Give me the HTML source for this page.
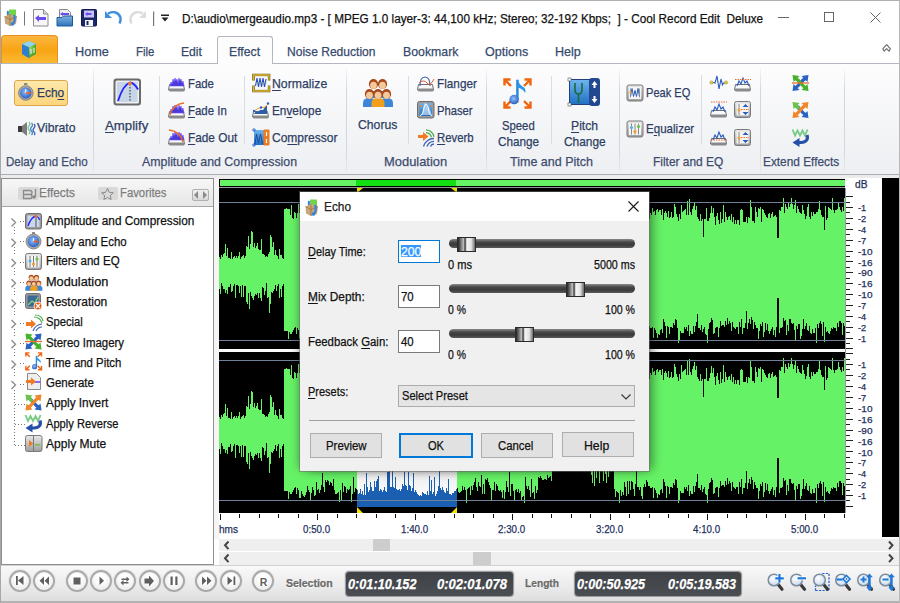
<!DOCTYPE html>
<html><head><meta charset="utf-8">
<style>
*{box-sizing:border-box;margin:0;padding:0}
html,body{width:900px;height:603px;overflow:hidden;background:#fff;font-family:"Liberation Sans",sans-serif;color:#1e2a3c;position:relative}
.a{position:absolute;white-space:nowrap;-webkit-text-stroke:0.25px currentColor}
svg{position:absolute;overflow:visible}
u{text-decoration:underline;text-underline-offset:2px}
.sep{position:absolute;top:68px;width:1px;height:105px;background:linear-gradient(#f6f7f8,#d3d7dd 20%,#d3d7dd 80%,#e9ebee)}
.ssep{position:absolute;width:1px;background:#d9dce1}
.chev{position:absolute;left:10px;width:5px;height:5px;border-right:1.3px solid #8a8a8a;border-top:1.3px solid #8a8a8a;transform:rotate(45deg)}
.btn{position:absolute;height:25px;background:#e1e1e1;border:1px solid #adadad}
.tb{position:absolute;top:570px;width:22px;height:22px;border-radius:50%;background:radial-gradient(circle at 50% 40%,#ffffff 30%,#eeeeee 65%,#dcdcdc 100%);border:2px solid #a9a9a9;box-shadow:inset 0 0 0 1px #fafafa,0 0 0 1px #e6e6e6}
.tm{position:absolute;top:572px;height:24px;background:linear-gradient(#3f4246,#4a4d51);border-radius:3px;box-shadow:0 0 0 1px #9c9c9c,0 0 0 2px #e0e0e0}
.trk{position:absolute;left:449px;width:186px;height:9px;border-radius:4.5px;background:linear-gradient(#8a8a8a,#474747 35%,#3a3a3a 65%,#5a5a5a)}
.thm{position:absolute;width:19px;height:15px;background:linear-gradient(90deg,#262626,#5a5a5a 12%,#bdbdbd 32%,#3a3a3a 42%,#f6f6f6 52%,#e2e2e2 78%,#6a6a6a);border:1px solid #2b2b2b}
</style></head><body>

<!-- TITLE BAR -->
<div class="a" style="left:778px;top:17px;width:11px;height:1px;background:#666"></div>
<div class="a" style="left:824px;top:12px;width:10px;height:10px;border:1px solid #666"></div>
<svg style="left:870px;top:12px" width="11" height="11"><path d="M0.5 0.5L10.5 10.5M10.5 0.5L0.5 10.5" stroke="#666" stroke-width="1"/></svg>

<!-- TAB ROW -->
<div class="a" style="left:0;top:0;width:1px;height:603px;background:#a8a8a8"></div><div class="a" style="left:0;top:0;width:900px;height:1px;background:#b0b0b0"></div>
<div class="a" style="left:1px;top:35px;width:57px;height:29px;background:linear-gradient(#fcb640,#f8a514 50%,#fbbb36);border:1px solid #ea8f1c;border-bottom:none;border-radius:4px 4px 0 0"></div>
<div class="a" style="left:217px;top:36px;width:56px;height:28px;background:#fcfcfd;border:1px solid #b3b8c0;border-bottom:none;border-radius:3px 3px 0 0"></div>
<div class="a" style="left:182.0px;top:12.8px;font-size:12.5px;line-height:12.5px;color:#111;transform:scaleX(0.9397);transform-origin:0 0;">D:\audio\mergeaudio.mp3 - [ MPEG 1.0 layer-3: 44,100 kHz; Stereo; 32-192 Kbps;&nbsp; ] - Cool Record Edit&nbsp; Deluxe</div>
<div class="a" style="left:75.1px;top:45.3px;font-size:13.5px;line-height:13.5px;color:#34496b;transform:scaleX(0.9413);transform-origin:0 0;">Home</div>
<div class="a" style="left:135.7px;top:45.3px;font-size:13.5px;line-height:13.5px;color:#34496b;transform:scaleX(0.8454);transform-origin:0 0;">File</div>
<div class="a" style="left:181.2px;top:45.3px;font-size:13.5px;line-height:13.5px;color:#34496b;transform:scaleX(0.8983);transform-origin:0 0;">Edit</div>
<div class="a" style="left:229.1px;top:45.3px;font-size:13.5px;line-height:13.5px;color:#34496b;transform:scaleX(0.9072);transform-origin:0 0;">Effect</div>
<div class="a" style="left:287.0px;top:45.3px;font-size:13.5px;line-height:13.5px;color:#34496b;transform:scaleX(0.8934);transform-origin:0 0;">Noise Reduction</div>
<div class="a" style="left:402.6px;top:45.3px;font-size:13.5px;line-height:13.5px;color:#34496b;transform:scaleX(0.9115);transform-origin:0 0;">Bookmark</div>
<div class="a" style="left:484.7px;top:45.3px;font-size:13.5px;line-height:13.5px;color:#34496b;transform:scaleX(0.9306);transform-origin:0 0;">Options</div>
<div class="a" style="left:554.8px;top:45.3px;font-size:13.5px;line-height:13.5px;color:#34496b;transform:scaleX(0.9292);transform-origin:0 0;">Help</div>

<!-- RIBBON -->
<div class="a" style="left:1px;top:63px;width:899px;height:112px;background:linear-gradient(#fdfdfe,#f4f5f7 55%,#edeff2);border-top:1px solid #b3b8c0;border-bottom:1px solid #a9aeb5"></div>
<div class="a" style="left:218px;top:63px;width:54px;height:2px;background:#fcfcfd"></div>
<div class="a" style="left:14px;top:80px;width:54px;height:26px;background:linear-gradient(#fde9ad,#fcd57b);border:1px solid #dba54a;border-radius:3px"></div>
<div class="sep" style="left:93px"></div>
<div class="ssep" style="left:159px;top:76px;height:68px"></div>
<div class="ssep" style="left:244px;top:76px;height:68px"></div>
<div class="sep" style="left:346px"></div>
<div class="ssep" style="left:408px;top:76px;height:68px"></div>
<div class="sep" style="left:486px"></div>
<div class="ssep" style="left:551px;top:76px;height:68px"></div>
<div class="sep" style="left:619px"></div>
<div class="ssep" style="left:701px;top:75px;height:69px"></div>
<div class="sep" style="left:760px"></div>
<div class="sep" style="left:844px"></div>
<div class="a" style="left:37.2px;top:85.8px;font-size:13.5px;line-height:13.5px;color:#2d3d63;transform:scaleX(0.8837);transform-origin:0 0;">Ech<u>o</u></div>
<div class="a" style="left:37.2px;top:121.1px;font-size:13.5px;line-height:13.5px;color:#2d3d63;transform:scaleX(0.9052);transform-origin:0 0;">Vibrato</div>
<div class="a" style="left:104.9px;top:118.8px;font-size:13.5px;line-height:13.5px;color:#2d3d63;transform:scaleX(0.9778);transform-origin:0 0;"><u>A</u>mplify</div>
<div class="a" style="left:187.6px;top:76.8px;font-size:13.5px;line-height:13.5px;color:#2d3d63;transform:scaleX(0.8414);transform-origin:0 0;">Fade</div>
<div class="a" style="left:187.6px;top:104.1px;font-size:13.5px;line-height:13.5px;color:#2d3d63;transform:scaleX(0.8472);transform-origin:0 0;"><u>F</u>ade In</div>
<div class="a" style="left:187.6px;top:130.8px;font-size:13.5px;line-height:13.5px;color:#2d3d63;transform:scaleX(0.8757);transform-origin:0 0;"><u>F</u>ade Out</div>
<div class="a" style="left:272.1px;top:76.8px;font-size:13.5px;line-height:13.5px;color:#2d3d63;transform:scaleX(0.9084);transform-origin:0 0;"><u>N</u>ormalize</div>
<div class="a" style="left:272.1px;top:104.1px;font-size:13.5px;line-height:13.5px;color:#2d3d63;transform:scaleX(0.8737);transform-origin:0 0;">En<u>v</u>elope</div>
<div class="a" style="left:272.1px;top:130.8px;font-size:13.5px;line-height:13.5px;color:#2d3d63;transform:scaleX(0.8894);transform-origin:0 0;">Co<u>m</u>pressor</div>
<div class="a" style="left:357.8px;top:118.0px;font-size:13.5px;line-height:13.5px;color:#2d3d63;transform:scaleX(0.9051);transform-origin:0 0;">Chorus</div>
<div class="a" style="left:436.6px;top:76.7px;font-size:13.5px;line-height:13.5px;color:#2d3d63;transform:scaleX(0.8715);transform-origin:0 0;">Flanger</div>
<div class="a" style="left:436.6px;top:103.8px;font-size:13.5px;line-height:13.5px;color:#2d3d63;transform:scaleX(0.8321);transform-origin:0 0;">Phaser</div>
<div class="a" style="left:436.6px;top:130.8px;font-size:13.5px;line-height:13.5px;color:#2d3d63;transform:scaleX(0.8385);transform-origin:0 0;"><u>R</u>everb</div>
<div class="a" style="left:501.5px;top:118.6px;font-size:13.5px;line-height:13.5px;color:#2d3d63;transform:scaleX(0.8371);transform-origin:0 0;">S<u>p</u>eed</div>
<div class="a" style="left:498.2px;top:135.2px;font-size:13.5px;line-height:13.5px;color:#2d3d63;transform:scaleX(0.8690);transform-origin:0 0;">Change</div>
<div class="a" style="left:570.8px;top:118.6px;font-size:13.5px;line-height:13.5px;color:#2d3d63;transform:scaleX(0.9024);transform-origin:0 0;"><u>P</u>itch</div>
<div class="a" style="left:564.1px;top:135.2px;font-size:13.5px;line-height:13.5px;color:#2d3d63;transform:scaleX(0.8817);transform-origin:0 0;">Change</div>
<div class="a" style="left:645.9px;top:85.7px;font-size:13.5px;line-height:13.5px;color:#2d3d63;transform:scaleX(0.8199);transform-origin:0 0;">Peak EQ</div>
<div class="a" style="left:645.9px;top:121.5px;font-size:13.5px;line-height:13.5px;color:#2d3d63;transform:scaleX(0.8559);transform-origin:0 0;">E<u>q</u>ualizer</div>
<div class="a" style="left:6.2px;top:155.4px;font-size:13.5px;line-height:13.5px;color:#3d4b6e;transform:scaleX(0.8572);transform-origin:0 0;">Delay and Echo</div>
<div class="a" style="left:141.6px;top:155.4px;font-size:13.5px;line-height:13.5px;color:#3d4b6e;transform:scaleX(0.9145);transform-origin:0 0;">Amplitude and Compression</div>
<div class="a" style="left:384.0px;top:155.4px;font-size:13.5px;line-height:13.5px;color:#3d4b6e;transform:scaleX(0.9569);transform-origin:0 0;">Modulation</div>
<div class="a" style="left:509.7px;top:155.4px;font-size:13.5px;line-height:13.5px;color:#3d4b6e;transform:scaleX(0.9269);transform-origin:0 0;">Time and Pitch</div>
<div class="a" style="left:653.2px;top:155.4px;font-size:13.5px;line-height:13.5px;color:#3d4b6e;transform:scaleX(0.8839);transform-origin:0 0;">Filter and EQ</div>
<div class="a" style="left:762.5px;top:155.4px;font-size:13.5px;line-height:13.5px;color:#3d4b6e;transform:scaleX(0.8778);transform-origin:0 0;">Extend Effects</div>

<!-- strip below ribbon -->
<div class="a" style="left:1px;top:175px;width:899px;height:4px;background:#ececec"></div>

<!-- LEFT PANEL -->
<div class="a" style="left:1px;top:178px;width:213px;height:387px;border:1px solid #8f8f8f;background:#fff"></div>
<div class="a" style="left:2px;top:179px;width:211px;height:28px;background:linear-gradient(#f7f7f7,#e6e6e6);border-bottom:1px solid #a6a6a6"></div>
<div class="a" style="left:18px;top:187px;width:21px;height:13px;background:#d9d9d9;border-radius:2px"></div>
<div class="a" style="left:98px;top:187px;width:20px;height:13px;background:#d9d9d9;border-radius:2px"></div>
<div class="a" style="left:192px;top:189px;width:17px;height:12px;background:linear-gradient(#f0f0f0,#d8d8d8);border:1px solid #b0b0b0;border-radius:2px"></div>
<svg style="left:0;top:0" width="900" height="603">
  <path d="M194 195l4-4v8zM207 195l-4-4v8z" fill="#8a8a8a"/>
  <path d="M23.5 190.5h6.5q2 0 2 2t-2 2h-6.5zM23.5 194.5h6.5q2 0 2 2t-2 2h-6.5z" stroke="#8a8a8a" stroke-width="1.3" fill="none"/><path d="M35.5 189v8" stroke="#8a8a8a" stroke-width="1.3"/><circle cx="34" cy="197" r="1.8" fill="#8a8a8a"/>
  <path d="M107.5 188.5l1.8 3.8 4 .5-3 2.7.8 4-3.6-2-3.6 2 .8-4-3-2.7 4-.5z" fill="none" stroke="#8a8a8a" stroke-width="1"/>
</svg>
<div class="a" style="left:46.2px;top:214.6px;font-size:12.5px;line-height:12.5px;color:#111;transform:scaleX(0.9444);transform-origin:0 0;">Amplitude and Compression</div>
<div class="a" style="left:46.2px;top:235.5px;font-size:12.5px;line-height:12.5px;color:#111;transform:scaleX(0.9132);transform-origin:0 0;">Delay and Echo</div>
<div class="a" style="left:46.2px;top:255.4px;font-size:12.5px;line-height:12.5px;color:#111;transform:scaleX(0.9213);transform-origin:0 0;">Filters and EQ</div>
<div class="a" style="left:46.2px;top:275.9px;font-size:12.5px;line-height:12.5px;color:#111;transform:scaleX(1.0187);transform-origin:0 0;">Modulation</div>
<div class="a" style="left:46.2px;top:296.2px;font-size:12.5px;line-height:12.5px;color:#111;transform:scaleX(0.9587);transform-origin:0 0;">Restoration</div>
<div class="a" style="left:46.2px;top:316.1px;font-size:12.5px;line-height:12.5px;color:#111;transform:scaleX(0.8976);transform-origin:0 0;">Special</div>
<div class="a" style="left:46.2px;top:336.9px;font-size:12.5px;line-height:12.5px;color:#111;transform:scaleX(0.9126);transform-origin:0 0;">Stereo Imagery</div>
<div class="a" style="left:46.2px;top:357.0px;font-size:12.5px;line-height:12.5px;color:#111;transform:scaleX(0.9083);transform-origin:0 0;">Time and Pitch</div>
<div class="a" style="left:46.2px;top:377.2px;font-size:12.5px;line-height:12.5px;color:#111;transform:scaleX(0.9189);transform-origin:0 0;">Generate</div>
<div class="a" style="left:46.2px;top:397.4px;font-size:12.5px;line-height:12.5px;color:#111;transform:scaleX(0.9452);transform-origin:0 0;">Apply Invert</div>
<div class="a" style="left:46.2px;top:417.6px;font-size:12.5px;line-height:12.5px;color:#111;transform:scaleX(0.8906);transform-origin:0 0;">Apply Reverse</div>
<div class="a" style="left:46.2px;top:438.1px;font-size:12.5px;line-height:12.5px;color:#111;transform:scaleX(0.9643);transform-origin:0 0;">Apply Mute</div>
<div class="a" style="left:38.8px;top:187.1px;font-size:12.5px;line-height:12.5px;color:#7d7d7d;transform:scaleX(0.9478);transform-origin:0 0;">Effects</div>
<div class="a" style="left:119.5px;top:187.1px;font-size:12.5px;line-height:12.5px;color:#7d7d7d;transform:scaleX(0.9046);transform-origin:0 0;">Favorites</div>

<!-- WAVE AREA -->
<div class="a" style="left:214px;top:178px;width:5px;height:361px;background:#f5f5f5"></div>
<div class="a" style="left:219px;top:179px;width:627px;height:9px;background:#000"></div>
<div class="a" style="left:220px;top:180px;width:625px;height:6px;background:#66f266"></div>
<div class="a" style="left:356px;top:180px;width:100px;height:6px;background:#12e012"></div>
<div class="a" style="left:219px;top:187px;width:627px;height:1px;background:#9a9a9a"></div>
<div class="a" style="left:219px;top:188px;width:627px;height:161px;background:#000"></div>
<div class="a" style="left:219px;top:349px;width:627px;height:3px;background:#fafafa"></div>
<div class="a" style="left:219px;top:352px;width:627px;height:161px;background:#000"></div>
<svg style="left:0;top:0" width="900" height="603">
  <defs>
    <clipPath id="outsel"><path d="M219 188H357V513H219ZM457 188H846V513H457Z"/></clipPath>
    <clipPath id="insel"><path d="M357 188H457V513H357Z"/></clipPath>
    <linearGradient id="selbg" x1="0" y1="0" x2="0" y2="1"><stop offset="0" stop-color="#ffffff"/><stop offset="0.5" stop-color="#d8d8d8"/><stop offset="1" stop-color="#ffffff"/></linearGradient>
  </defs>
  <rect x="357" y="193" width="100" height="314" fill="#1a5fb2"/>
  <g clip-path="url(#outsel)">
    <path d="M219 257V257h1V259h1V255h1V257h1V254h1V253h1V244h1V256h1V248h1V258h1V258h1V259h1V252h1V259h1V257h1V256h1V258h1V256h1V258h1V256h1V252h1V259h1V257h1V256h1V255h1V258h1V256h1V246h1V247h1V236h1V249h1V244h1V231h1V232h1V247h1V243h1V248h1V246h1V243h1V249h1V250h1V250h1V239h1V254h1V254h1V255h1V257h1V256h1V257h1V254h1V252h1V235h1V237h1V247h1V242h1V255h1V250h1V255h1V256h1V259h1V249h1V255h1V255h1V258h1V259h1V209h1V209h1V208h1V209h1V209h1V209h1V215h1V205h1V218h1V219h1V212h1V213h1V218h1V213h1V204h1V213h1V214h1V217h1V221h1V222h1V216h1V210h1V217h1V203h1V213h1V217h1V218h1V218h1V214h1V216h1V220h1V222h1V222h1V218h1V223h1V222h1V221h1V235h1V216h1V206h1V218h1V217h1V210h1V210h1V216h1V219h1V217h1V233h1V221h1V221h1V220h1V203h1V217h1V204h1V207h1V208h1V207h1V214h1V213h1V216h1V218h1V213h1V205h1V212h1V206h1V217h1V217h1V207h1V220h1V206h1V215h1V219h1V215h1V218h1V212h1V213h1V212h1V228h1V214h1V200h1V204h1V213h1V216h1V212h1V205h1V216h1V213h1V217h1V212h1V211h1V215h1V212h1V208h1V216h1V214h1V211h1V213h1V215h1V216h1V219h1V215h1V224h1V213h1V211h1V210h1V211h1V211h1V198h1V215h1V214h1V212h1V216h1V217h1V212h1V216h1V208h1V211h1V208h1V212h1V201h1V207h1V204h1V206h1V204h1V212h1V207h1V212h1V208h1V203h1V215h1V215h1V201h1V211h1V209h1V214h1V207h1V213h1V214h1V216h1V215h1V227h1V217h1V219h1V202h1V214h1V216h1V211h1V204h1V212h1V213h1V215h1V215h1V215h1V219h1V213h1V204h1V210h1V217h1V223h1V221h1V223h1V219h1V215h1V200h1V217h1V216h1V214h1V214h1V216h1V220h1V225h1V213h1V204h1V207h1V208h1V209h1V222h1V214h1V199h1V209h1V215h1V212h1V198h1V206h1V211h1V209h1V210h1V207h1V206h1V208h1V211h1V210h1V207h1V212h1V211h1V201h1V212h1V212h1V205h1V205h1V204h1V198h1V198h1V206h1V198h1V205h1V211h1V210h1V202h1V212h1V210h1V211h1V212h1V208h1V215h1V208h1V214h1V214h1V211h1V206h1V205h1V209h1V198h1V220h1V210h1V198h1V205h1V202h1V207h1V204h1V220h1V209h1V212h1V208h1V208h1V215h1V212h1V207h1V230h1V215h1V212h1V207h1V198h1V207h1V212h1V216h1V211h1V215h1V205h1V216h1V211h1V205h1V209h1V212h1V221h1V218h1V203h1V219h1V219h1V215h1V217h1V220h1V217h1V219h1V227h1V210h1V203h1V198h1V233h1V238h1V235h1V239h1V235h1V235h1V237h1V239h1V237h1V238h1V233h1V236h1V237h1V238h1V238h1V234h1V235h1V235h1V236h1V237h1V237h1V232h1V232h1V237h1V233h1V235h1V236h1V235h1V237h1V233h1V232h1V238h1V232h1V238h1V238h1V237h1V239h1V235h1V236h1V218h1V218h1V236h1V224h1V235h1V219h1V236h1V238h1V227h1V236h1V236h1V234h1V224h1V236h1V219h1V225h1V235h1V218h1V236h1V235h1V233h1V233h1V235h1V217h1V222h1V220h1V210h1V207h1V216h1V218h1V208h1V220h1V218h1V219h1V214h1V218h1V217h1V210h1V201h1V202h1V214h1V208h1V217h1V208h1V209h1V212h1V213h1V219h1V207h1V214h1V215h1V222h1V223h1V216h1V219h1V214h1V217h1V213h1V219h1V213h1V215h1V208h1V212h1V211h1V215h1V210h1V209h1V212h1V210h1V210h1V215h1V209h1V220h1V213h1V211h1V213h1V217h1V211h1V218h1V217h1V212h1V218h1V217h1V204h1V207h1V214h1V217h1V221h1V214h1V219h1V205h1V212h1V211h1V210h1V209h1V215h1V201h1V215h1V199h1V212h1V215h1V209h1V206h1V202h1V210h1V206h1V217h1V219h1V221h1V214h1V221h1V219h1V237h1V219h1V219h1V208h1V221h1V221h1V218h1V213h1V206h1V213h1V208h1V217h1V225h1V216h1V213h1V220h1V224h1V212h1V223h1V219h1V205h1V222h1V212h1V217h1V220h1V217h1V216h1V220h1V214h1V222h1V217h1V224h1V220h1V224h1V220h1V220h1V225h1V210h1V209h1V210h1V222h1V222h1V222h1V217h1V223h1V217h1V218h1V200h1V207h1V221h1V221h1V223h1V207h1V212h1V217h1V208h1V209h1V207h1V222h1V209h1V210h1V213h1V215h1V217h1V218h1V214h1V213h1V218h1V214h1V212h1V217h1V216h1V215h1V217h1V238h1V238h1V210h1V211h1V207h1V207h1V198h1V213h1V204h1V207h1V209h1V203h1V207h1V204h1V198h1V204h1V209h1V205h1V200h1V213h1V206h1V209h1V212h1V213h1V214h1V205h1V210h1V214h1V219h1V216h1V207h1V204h1V217h1V219h1V212h1V216h1V212h1V214h1V214h1V212h1V212h1V209h1V201h1V210h1V215h1V217h1V217h1V230h1V206h1V220h1V218h1V207h1V208h1V209h1V210h1V198h1V210h1V213h1V210h1V210h1V209h1V202h1V207h1V210h1V212h1V207h1V211h1V198h1V326h-1V323h-1V335h-1V323h-1V321h-1V321h-1V327h-1V323h-1V331h-1V328h-1V328h-1V327h-1V329h-1V328h-1V331h-1V334h-1V333h-1V331h-1V332h-1V327h-1V342h-1V322h-1V336h-1V324h-1V321h-1V323h-1V328h-1V324h-1V343h-1V328h-1V333h-1V333h-1V329h-1V334h-1V333h-1V326h-1V331h-1V330h-1V323h-1V326h-1V329h-1V319h-1V329h-1V336h-1V339h-1V324h-1V324h-1V329h-1V326h-1V340h-1V330h-1V323h-1V324h-1V323h-1V319h-1V319h-1V331h-1V325h-1V335h-1V320h-1V321h-1V318h-1V327h-1V328h-1V328h-1V333h-1V298h-1V298h-1V327h-1V337h-1V330h-1V335h-1V327h-1V329h-1V331h-1V334h-1V331h-1V324h-1V330h-1V323h-1V332h-1V337h-1V322h-1V326h-1V324h-1V331h-1V339h-1V328h-1V328h-1V325h-1V322h-1V329h-1V320h-1V317h-1V324h-1V319h-1V323h-1V329h-1V311h-1V323h-1V328h-1V328h-1V334h-1V319h-1V327h-1V322h-1V334h-1V327h-1V327h-1V329h-1V328h-1V327h-1V322h-1V331h-1V323h-1V321h-1V324h-1V318h-1V325h-1V321h-1V327h-1V325h-1V325h-1V326h-1V321h-1V328h-1V337h-1V327h-1V327h-1V328h-1V333h-1V334h-1V320h-1V318h-1V322h-1V323h-1V329h-1V343h-1V335h-1V334h-1V327h-1V329h-1V332h-1V325h-1V330h-1V328h-1V328h-1V314h-1V322h-1V326h-1V332h-1V326h-1V334h-1V334h-1V331h-1V336h-1V325h-1V331h-1V327h-1V329h-1V327h-1V333h-1V333h-1V333h-1V331h-1V341h-1V343h-1V328h-1V320h-1V319h-1V325h-1V323h-1V328h-1V327h-1V327h-1V334h-1V327h-1V326h-1V338h-1V326h-1V322h-1V319h-1V333h-1V329h-1V330h-1V335h-1V334h-1V338h-1V333h-1V330h-1V328h-1V338h-1V327h-1V328h-1V328h-1V326h-1V326h-1V322h-1V320h-1V327h-1V324h-1V327h-1V339h-1V336h-1V327h-1V330h-1V327h-1V327h-1V310h-1V324h-1V336h-1V329h-1V322h-1V321h-1V330h-1V321h-1V334h-1V321h-1V336h-1V327h-1V322h-1V335h-1V332h-1V336h-1V330h-1V343h-1V333h-1V332h-1V331h-1V337h-1V329h-1V307h-1V301h-1V303h-1V301h-1V304h-1V317h-1V301h-1V323h-1V314h-1V305h-1V321h-1V304h-1V306h-1V307h-1V323h-1V306h-1V302h-1V318h-1V305h-1V326h-1V306h-1V323h-1V315h-1V304h-1V306h-1V301h-1V303h-1V306h-1V301h-1V301h-1V302h-1V303h-1V302h-1V304h-1V302h-1V303h-1V304h-1V302h-1V308h-1V304h-1V303h-1V305h-1V306h-1V305h-1V306h-1V303h-1V304h-1V305h-1V306h-1V306h-1V307h-1V305h-1V301h-1V302h-1V303h-1V306h-1V305h-1V308h-1V302h-1V304h-1V303h-1V306h-1V321h-1V316h-1V317h-1V318h-1V315h-1V320h-1V319h-1V319h-1V320h-1V320h-1V318h-1V316h-1V318h-1V317h-1V330h-1V333h-1V326h-1V339h-1V332h-1V333h-1V319h-1V337h-1V330h-1V326h-1V329h-1V326h-1V317h-1V343h-1V336h-1V337h-1V341h-1V331h-1V333h-1V329h-1V332h-1V329h-1V330h-1V341h-1V331h-1V324h-1V324h-1V336h-1V312h-1V332h-1V327h-1V321h-1V332h-1V339h-1V330h-1V338h-1V332h-1V330h-1V331h-1V330h-1V326h-1V324h-1V331h-1V322h-1V330h-1V330h-1V341h-1V328h-1V325h-1V322h-1V318h-1V320h-1V319h-1V334h-1V324h-1V334h-1V315h-1V327h-1V326h-1V322h-1V331h-1V327h-1V318h-1V322h-1V325h-1V330h-1V326h-1V335h-1V327h-1V328h-1V329h-1V343h-1V330h-1V327h-1V330h-1V326h-1V331h-1V332h-1V333h-1V332h-1V328h-1V329h-1V331h-1V331h-1V333h-1V333h-1V335h-1V334h-1V334h-1V319h-1V331h-1V328h-1V333h-1V332h-1V330h-1V327h-1V330h-1V328h-1V311h-1V326h-1V331h-1V334h-1V336h-1V317h-1V332h-1V334h-1V320h-1V331h-1V316h-1V335h-1V331h-1V335h-1V334h-1V334h-1V333h-1V332h-1V336h-1V335h-1V336h-1V335h-1V334h-1V332h-1V330h-1V332h-1V313h-1V328h-1V331h-1V326h-1V325h-1V312h-1V330h-1V326h-1V325h-1V312h-1V326h-1V324h-1V329h-1V331h-1V329h-1V330h-1V330h-1V329h-1V317h-1V328h-1V327h-1V307h-1V327h-1V327h-1V310h-1V312h-1V312h-1V332h-1V331h-1V327h-1V330h-1V332h-1V330h-1V329h-1V331h-1V316h-1V319h-1V321h-1V327h-1V321h-1V331h-1V331h-1V327h-1V322h-1V330h-1V332h-1V327h-1V313h-1V335h-1V324h-1V335h-1V331h-1V334h-1V329h-1V333h-1V334h-1V330h-1V329h-1V328h-1V332h-1V317h-1V334h-1V342h-1V326h-1V329h-1V330h-1V329h-1V333h-1V327h-1V326h-1V332h-1V323h-1V341h-1V330h-1V342h-1V332h-1V333h-1V334h-1V334h-1V330h-1V319h-1V326h-1V323h-1V322h-1V325h-1V321h-1V320h-1V322h-1V320h-1V332h-1V327h-1V313h-1V325h-1V330h-1V333h-1V329h-1V330h-1V322h-1V335h-1V336h-1V330h-1V327h-1V333h-1V340h-1V332h-1V330h-1V326h-1V332h-1V335h-1V337h-1V336h-1V334h-1V331h-1V338h-1V338h-1V330h-1V328h-1V334h-1V327h-1V328h-1V330h-1V332h-1V334h-1V334h-1V332h-1V339h-1V331h-1V331h-1V331h-1V331h-1V284h-1V286h-1V297h-1V289h-1V298h-1V284h-1V286h-1V291h-1V285h-1V289h-1V291h-1V293h-1V292h-1V304h-1V313h-1V297h-1V298h-1V283h-1V291h-1V295h-1V288h-1V287h-1V301h-1V298h-1V293h-1V298h-1V293h-1V295h-1V294h-1V296h-1V300h-1V298h-1V296h-1V292h-1V309h-1V293h-1V304h-1V302h-1V286h-1V286h-1V297h-1V285h-1V297h-1V286h-1V293h-1V286h-1V285h-1V285h-1V298h-1V284h-1V286h-1V291h-1V292h-1V284h-1V287h-1V287h-1V294h-1V290h-1V293h-1V289h-1V289h-1V286h-1V283h-1V294h-1V289h-1Z" fill="#66f266"/>
    <path d="M219 417V417h1V419h1V415h1V417h1V414h1V413h1V404h1V416h1V408h1V418h1V418h1V419h1V412h1V419h1V417h1V416h1V418h1V416h1V418h1V416h1V412h1V419h1V417h1V416h1V415h1V418h1V416h1V406h1V407h1V396h1V409h1V404h1V391h1V392h1V407h1V403h1V408h1V406h1V403h1V409h1V410h1V410h1V399h1V414h1V414h1V415h1V417h1V416h1V417h1V414h1V412h1V395h1V397h1V407h1V402h1V415h1V410h1V415h1V416h1V419h1V409h1V415h1V415h1V418h1V419h1V369h1V369h1V368h1V369h1V369h1V369h1V375h1V365h1V378h1V379h1V372h1V373h1V378h1V373h1V364h1V373h1V374h1V377h1V381h1V382h1V376h1V370h1V377h1V363h1V373h1V377h1V378h1V378h1V374h1V376h1V380h1V382h1V382h1V378h1V383h1V382h1V381h1V395h1V376h1V366h1V378h1V377h1V370h1V370h1V376h1V379h1V377h1V393h1V381h1V381h1V380h1V363h1V377h1V364h1V367h1V368h1V367h1V374h1V373h1V376h1V378h1V373h1V365h1V372h1V366h1V377h1V377h1V367h1V380h1V366h1V375h1V379h1V375h1V378h1V372h1V373h1V372h1V388h1V374h1V360h1V364h1V373h1V376h1V372h1V365h1V376h1V373h1V377h1V372h1V371h1V375h1V372h1V368h1V376h1V374h1V371h1V373h1V375h1V376h1V379h1V375h1V384h1V373h1V371h1V370h1V371h1V371h1V358h1V375h1V374h1V372h1V376h1V377h1V372h1V376h1V368h1V371h1V368h1V372h1V361h1V367h1V364h1V366h1V364h1V372h1V367h1V372h1V368h1V363h1V375h1V375h1V361h1V371h1V369h1V374h1V367h1V373h1V374h1V376h1V375h1V387h1V377h1V379h1V362h1V374h1V376h1V371h1V364h1V372h1V373h1V375h1V375h1V375h1V379h1V373h1V364h1V370h1V377h1V383h1V381h1V383h1V379h1V375h1V360h1V377h1V376h1V374h1V374h1V376h1V380h1V385h1V373h1V364h1V367h1V368h1V369h1V382h1V374h1V359h1V369h1V375h1V372h1V358h1V366h1V371h1V369h1V370h1V367h1V366h1V368h1V371h1V370h1V367h1V372h1V371h1V361h1V372h1V372h1V365h1V365h1V364h1V358h1V358h1V366h1V358h1V365h1V371h1V370h1V362h1V372h1V370h1V371h1V372h1V368h1V375h1V368h1V374h1V374h1V371h1V366h1V365h1V369h1V358h1V380h1V370h1V358h1V365h1V362h1V367h1V364h1V380h1V369h1V372h1V368h1V368h1V375h1V372h1V367h1V390h1V375h1V372h1V367h1V358h1V367h1V372h1V376h1V371h1V375h1V365h1V376h1V371h1V365h1V369h1V372h1V381h1V378h1V363h1V379h1V379h1V375h1V377h1V380h1V377h1V379h1V387h1V370h1V363h1V358h1V393h1V398h1V395h1V399h1V395h1V395h1V397h1V399h1V397h1V398h1V393h1V396h1V397h1V398h1V398h1V394h1V395h1V395h1V396h1V397h1V397h1V392h1V392h1V397h1V393h1V395h1V396h1V395h1V397h1V393h1V392h1V398h1V392h1V398h1V398h1V397h1V399h1V395h1V396h1V378h1V378h1V396h1V384h1V395h1V379h1V396h1V398h1V387h1V396h1V396h1V394h1V384h1V396h1V379h1V385h1V395h1V378h1V396h1V395h1V393h1V393h1V395h1V377h1V382h1V380h1V370h1V367h1V376h1V378h1V368h1V380h1V378h1V379h1V374h1V378h1V377h1V370h1V361h1V362h1V374h1V368h1V377h1V368h1V369h1V372h1V373h1V379h1V367h1V374h1V375h1V382h1V383h1V376h1V379h1V374h1V377h1V373h1V379h1V373h1V375h1V368h1V372h1V371h1V375h1V370h1V369h1V372h1V370h1V370h1V375h1V369h1V380h1V373h1V371h1V373h1V377h1V371h1V378h1V377h1V372h1V378h1V377h1V364h1V367h1V374h1V377h1V381h1V374h1V379h1V365h1V372h1V371h1V370h1V369h1V375h1V361h1V375h1V359h1V372h1V375h1V369h1V366h1V362h1V370h1V366h1V377h1V379h1V381h1V374h1V381h1V379h1V397h1V379h1V379h1V368h1V381h1V381h1V378h1V373h1V366h1V373h1V368h1V377h1V385h1V376h1V373h1V380h1V384h1V372h1V383h1V379h1V365h1V382h1V372h1V377h1V380h1V377h1V376h1V380h1V374h1V382h1V377h1V384h1V380h1V384h1V380h1V380h1V385h1V370h1V369h1V370h1V382h1V382h1V382h1V377h1V383h1V377h1V378h1V360h1V367h1V381h1V381h1V383h1V367h1V372h1V377h1V368h1V369h1V367h1V382h1V369h1V370h1V373h1V375h1V377h1V378h1V374h1V373h1V378h1V374h1V372h1V377h1V376h1V375h1V377h1V398h1V398h1V370h1V371h1V367h1V367h1V358h1V373h1V364h1V367h1V369h1V363h1V367h1V364h1V358h1V364h1V369h1V365h1V360h1V373h1V366h1V369h1V372h1V373h1V374h1V365h1V370h1V374h1V379h1V376h1V367h1V364h1V377h1V379h1V372h1V376h1V372h1V374h1V374h1V372h1V372h1V369h1V361h1V370h1V375h1V377h1V377h1V390h1V366h1V380h1V378h1V367h1V368h1V369h1V370h1V358h1V370h1V373h1V370h1V370h1V369h1V362h1V367h1V370h1V372h1V367h1V371h1V358h1V486h-1V483h-1V495h-1V483h-1V481h-1V481h-1V487h-1V483h-1V491h-1V488h-1V488h-1V487h-1V489h-1V488h-1V491h-1V494h-1V493h-1V491h-1V492h-1V487h-1V502h-1V482h-1V496h-1V484h-1V481h-1V483h-1V488h-1V484h-1V503h-1V488h-1V493h-1V493h-1V489h-1V494h-1V493h-1V486h-1V491h-1V490h-1V483h-1V486h-1V489h-1V479h-1V489h-1V496h-1V499h-1V484h-1V484h-1V489h-1V486h-1V500h-1V490h-1V483h-1V484h-1V483h-1V479h-1V479h-1V491h-1V485h-1V495h-1V480h-1V481h-1V478h-1V487h-1V488h-1V488h-1V493h-1V458h-1V458h-1V487h-1V497h-1V490h-1V495h-1V487h-1V489h-1V491h-1V494h-1V491h-1V484h-1V490h-1V483h-1V492h-1V497h-1V482h-1V486h-1V484h-1V491h-1V499h-1V488h-1V488h-1V485h-1V482h-1V489h-1V480h-1V477h-1V484h-1V479h-1V483h-1V489h-1V471h-1V483h-1V488h-1V488h-1V494h-1V479h-1V487h-1V482h-1V494h-1V487h-1V487h-1V489h-1V488h-1V487h-1V482h-1V491h-1V483h-1V481h-1V484h-1V478h-1V485h-1V481h-1V487h-1V485h-1V485h-1V486h-1V481h-1V488h-1V497h-1V487h-1V487h-1V488h-1V493h-1V494h-1V480h-1V478h-1V482h-1V483h-1V489h-1V503h-1V495h-1V494h-1V487h-1V489h-1V492h-1V485h-1V490h-1V488h-1V488h-1V474h-1V482h-1V486h-1V492h-1V486h-1V494h-1V494h-1V491h-1V496h-1V485h-1V491h-1V487h-1V489h-1V487h-1V493h-1V493h-1V493h-1V491h-1V501h-1V503h-1V488h-1V480h-1V479h-1V485h-1V483h-1V488h-1V487h-1V487h-1V494h-1V487h-1V486h-1V498h-1V486h-1V482h-1V479h-1V493h-1V489h-1V490h-1V495h-1V494h-1V498h-1V493h-1V490h-1V488h-1V498h-1V487h-1V488h-1V488h-1V486h-1V486h-1V482h-1V480h-1V487h-1V484h-1V487h-1V499h-1V496h-1V487h-1V490h-1V487h-1V487h-1V470h-1V484h-1V496h-1V489h-1V482h-1V481h-1V490h-1V481h-1V494h-1V481h-1V496h-1V487h-1V482h-1V495h-1V492h-1V496h-1V490h-1V503h-1V493h-1V492h-1V491h-1V497h-1V489h-1V467h-1V461h-1V463h-1V461h-1V464h-1V477h-1V461h-1V483h-1V474h-1V465h-1V481h-1V464h-1V466h-1V467h-1V483h-1V466h-1V462h-1V478h-1V465h-1V486h-1V466h-1V483h-1V475h-1V464h-1V466h-1V461h-1V463h-1V466h-1V461h-1V461h-1V462h-1V463h-1V462h-1V464h-1V462h-1V463h-1V464h-1V462h-1V468h-1V464h-1V463h-1V465h-1V466h-1V465h-1V466h-1V463h-1V464h-1V465h-1V466h-1V466h-1V467h-1V465h-1V461h-1V462h-1V463h-1V466h-1V465h-1V468h-1V462h-1V464h-1V463h-1V466h-1V481h-1V476h-1V477h-1V478h-1V475h-1V480h-1V479h-1V479h-1V480h-1V480h-1V478h-1V476h-1V478h-1V477h-1V490h-1V493h-1V486h-1V499h-1V492h-1V493h-1V479h-1V497h-1V490h-1V486h-1V489h-1V486h-1V477h-1V503h-1V496h-1V497h-1V501h-1V491h-1V493h-1V489h-1V492h-1V489h-1V490h-1V501h-1V491h-1V484h-1V484h-1V496h-1V472h-1V492h-1V487h-1V481h-1V492h-1V499h-1V490h-1V498h-1V492h-1V490h-1V491h-1V490h-1V486h-1V484h-1V491h-1V482h-1V490h-1V490h-1V501h-1V488h-1V485h-1V482h-1V478h-1V480h-1V479h-1V494h-1V484h-1V494h-1V475h-1V487h-1V486h-1V482h-1V491h-1V487h-1V478h-1V482h-1V485h-1V490h-1V486h-1V495h-1V487h-1V488h-1V489h-1V503h-1V490h-1V487h-1V490h-1V486h-1V491h-1V492h-1V493h-1V492h-1V488h-1V489h-1V491h-1V491h-1V493h-1V493h-1V495h-1V494h-1V494h-1V479h-1V491h-1V488h-1V493h-1V492h-1V490h-1V487h-1V490h-1V488h-1V471h-1V486h-1V491h-1V494h-1V496h-1V477h-1V492h-1V494h-1V480h-1V491h-1V476h-1V495h-1V491h-1V495h-1V494h-1V494h-1V493h-1V492h-1V496h-1V495h-1V496h-1V495h-1V494h-1V492h-1V490h-1V492h-1V473h-1V488h-1V491h-1V486h-1V485h-1V472h-1V490h-1V486h-1V485h-1V472h-1V486h-1V484h-1V489h-1V491h-1V489h-1V490h-1V490h-1V489h-1V477h-1V488h-1V487h-1V467h-1V487h-1V487h-1V470h-1V472h-1V472h-1V492h-1V491h-1V487h-1V490h-1V492h-1V490h-1V489h-1V491h-1V476h-1V479h-1V481h-1V487h-1V481h-1V491h-1V491h-1V487h-1V482h-1V490h-1V492h-1V487h-1V473h-1V495h-1V484h-1V495h-1V491h-1V494h-1V489h-1V493h-1V494h-1V490h-1V489h-1V488h-1V492h-1V477h-1V494h-1V502h-1V486h-1V489h-1V490h-1V489h-1V493h-1V487h-1V486h-1V492h-1V483h-1V501h-1V490h-1V502h-1V492h-1V493h-1V494h-1V494h-1V490h-1V479h-1V486h-1V483h-1V482h-1V485h-1V481h-1V480h-1V482h-1V480h-1V492h-1V487h-1V473h-1V485h-1V490h-1V493h-1V489h-1V490h-1V482h-1V495h-1V496h-1V490h-1V487h-1V493h-1V500h-1V492h-1V490h-1V486h-1V492h-1V495h-1V497h-1V496h-1V494h-1V491h-1V498h-1V498h-1V490h-1V488h-1V494h-1V487h-1V488h-1V490h-1V492h-1V494h-1V494h-1V492h-1V499h-1V491h-1V491h-1V491h-1V491h-1V444h-1V446h-1V457h-1V449h-1V458h-1V444h-1V446h-1V451h-1V445h-1V449h-1V451h-1V453h-1V452h-1V464h-1V473h-1V457h-1V458h-1V443h-1V451h-1V455h-1V448h-1V447h-1V461h-1V458h-1V453h-1V458h-1V453h-1V455h-1V454h-1V456h-1V460h-1V458h-1V456h-1V452h-1V469h-1V453h-1V464h-1V462h-1V446h-1V446h-1V457h-1V445h-1V457h-1V446h-1V453h-1V446h-1V445h-1V445h-1V458h-1V444h-1V446h-1V451h-1V452h-1V444h-1V447h-1V447h-1V454h-1V450h-1V453h-1V449h-1V449h-1V446h-1V443h-1V454h-1V449h-1Z" fill="#66f266"/>
  </g>
  <g clip-path="url(#insel)">
    <path d="M219 257V257h1V259h1V255h1V257h1V254h1V253h1V244h1V256h1V248h1V258h1V258h1V259h1V252h1V259h1V257h1V256h1V258h1V256h1V258h1V256h1V252h1V259h1V257h1V256h1V255h1V258h1V256h1V246h1V247h1V236h1V249h1V244h1V231h1V232h1V247h1V243h1V248h1V246h1V243h1V249h1V250h1V250h1V239h1V254h1V254h1V255h1V257h1V256h1V257h1V254h1V252h1V235h1V237h1V247h1V242h1V255h1V250h1V255h1V256h1V259h1V249h1V255h1V255h1V258h1V259h1V209h1V209h1V208h1V209h1V209h1V209h1V215h1V205h1V218h1V219h1V212h1V213h1V218h1V213h1V204h1V213h1V214h1V217h1V221h1V222h1V216h1V210h1V217h1V203h1V213h1V217h1V218h1V218h1V214h1V216h1V220h1V222h1V222h1V218h1V223h1V222h1V221h1V235h1V216h1V206h1V218h1V217h1V210h1V210h1V216h1V219h1V217h1V233h1V221h1V221h1V220h1V203h1V217h1V204h1V207h1V208h1V207h1V214h1V213h1V216h1V218h1V213h1V205h1V212h1V206h1V217h1V217h1V207h1V220h1V206h1V215h1V219h1V215h1V218h1V212h1V213h1V212h1V228h1V214h1V200h1V204h1V213h1V216h1V212h1V205h1V216h1V213h1V217h1V212h1V211h1V215h1V212h1V208h1V216h1V214h1V211h1V213h1V215h1V216h1V219h1V215h1V224h1V213h1V211h1V210h1V211h1V211h1V198h1V215h1V214h1V212h1V216h1V217h1V212h1V216h1V208h1V211h1V208h1V212h1V201h1V207h1V204h1V206h1V204h1V212h1V207h1V212h1V208h1V203h1V215h1V215h1V201h1V211h1V209h1V214h1V207h1V213h1V214h1V216h1V215h1V227h1V217h1V219h1V202h1V214h1V216h1V211h1V204h1V212h1V213h1V215h1V215h1V215h1V219h1V213h1V204h1V210h1V217h1V223h1V221h1V223h1V219h1V215h1V200h1V217h1V216h1V214h1V214h1V216h1V220h1V225h1V213h1V204h1V207h1V208h1V209h1V222h1V214h1V199h1V209h1V215h1V212h1V198h1V206h1V211h1V209h1V210h1V207h1V206h1V208h1V211h1V210h1V207h1V212h1V211h1V201h1V212h1V212h1V205h1V205h1V204h1V198h1V198h1V206h1V198h1V205h1V211h1V210h1V202h1V212h1V210h1V211h1V212h1V208h1V215h1V208h1V214h1V214h1V211h1V206h1V205h1V209h1V198h1V220h1V210h1V198h1V205h1V202h1V207h1V204h1V220h1V209h1V212h1V208h1V208h1V215h1V212h1V207h1V230h1V215h1V212h1V207h1V198h1V207h1V212h1V216h1V211h1V215h1V205h1V216h1V211h1V205h1V209h1V212h1V221h1V218h1V203h1V219h1V219h1V215h1V217h1V220h1V217h1V219h1V227h1V210h1V203h1V198h1V233h1V238h1V235h1V239h1V235h1V235h1V237h1V239h1V237h1V238h1V233h1V236h1V237h1V238h1V238h1V234h1V235h1V235h1V236h1V237h1V237h1V232h1V232h1V237h1V233h1V235h1V236h1V235h1V237h1V233h1V232h1V238h1V232h1V238h1V238h1V237h1V239h1V235h1V236h1V218h1V218h1V236h1V224h1V235h1V219h1V236h1V238h1V227h1V236h1V236h1V234h1V224h1V236h1V219h1V225h1V235h1V218h1V236h1V235h1V233h1V233h1V235h1V217h1V222h1V220h1V210h1V207h1V216h1V218h1V208h1V220h1V218h1V219h1V214h1V218h1V217h1V210h1V201h1V202h1V214h1V208h1V217h1V208h1V209h1V212h1V213h1V219h1V207h1V214h1V215h1V222h1V223h1V216h1V219h1V214h1V217h1V213h1V219h1V213h1V215h1V208h1V212h1V211h1V215h1V210h1V209h1V212h1V210h1V210h1V215h1V209h1V220h1V213h1V211h1V213h1V217h1V211h1V218h1V217h1V212h1V218h1V217h1V204h1V207h1V214h1V217h1V221h1V214h1V219h1V205h1V212h1V211h1V210h1V209h1V215h1V201h1V215h1V199h1V212h1V215h1V209h1V206h1V202h1V210h1V206h1V217h1V219h1V221h1V214h1V221h1V219h1V237h1V219h1V219h1V208h1V221h1V221h1V218h1V213h1V206h1V213h1V208h1V217h1V225h1V216h1V213h1V220h1V224h1V212h1V223h1V219h1V205h1V222h1V212h1V217h1V220h1V217h1V216h1V220h1V214h1V222h1V217h1V224h1V220h1V224h1V220h1V220h1V225h1V210h1V209h1V210h1V222h1V222h1V222h1V217h1V223h1V217h1V218h1V200h1V207h1V221h1V221h1V223h1V207h1V212h1V217h1V208h1V209h1V207h1V222h1V209h1V210h1V213h1V215h1V217h1V218h1V214h1V213h1V218h1V214h1V212h1V217h1V216h1V215h1V217h1V238h1V238h1V210h1V211h1V207h1V207h1V198h1V213h1V204h1V207h1V209h1V203h1V207h1V204h1V198h1V204h1V209h1V205h1V200h1V213h1V206h1V209h1V212h1V213h1V214h1V205h1V210h1V214h1V219h1V216h1V207h1V204h1V217h1V219h1V212h1V216h1V212h1V214h1V214h1V212h1V212h1V209h1V201h1V210h1V215h1V217h1V217h1V230h1V206h1V220h1V218h1V207h1V208h1V209h1V210h1V198h1V210h1V213h1V210h1V210h1V209h1V202h1V207h1V210h1V212h1V207h1V211h1V198h1V326h-1V323h-1V335h-1V323h-1V321h-1V321h-1V327h-1V323h-1V331h-1V328h-1V328h-1V327h-1V329h-1V328h-1V331h-1V334h-1V333h-1V331h-1V332h-1V327h-1V342h-1V322h-1V336h-1V324h-1V321h-1V323h-1V328h-1V324h-1V343h-1V328h-1V333h-1V333h-1V329h-1V334h-1V333h-1V326h-1V331h-1V330h-1V323h-1V326h-1V329h-1V319h-1V329h-1V336h-1V339h-1V324h-1V324h-1V329h-1V326h-1V340h-1V330h-1V323h-1V324h-1V323h-1V319h-1V319h-1V331h-1V325h-1V335h-1V320h-1V321h-1V318h-1V327h-1V328h-1V328h-1V333h-1V298h-1V298h-1V327h-1V337h-1V330h-1V335h-1V327h-1V329h-1V331h-1V334h-1V331h-1V324h-1V330h-1V323h-1V332h-1V337h-1V322h-1V326h-1V324h-1V331h-1V339h-1V328h-1V328h-1V325h-1V322h-1V329h-1V320h-1V317h-1V324h-1V319h-1V323h-1V329h-1V311h-1V323h-1V328h-1V328h-1V334h-1V319h-1V327h-1V322h-1V334h-1V327h-1V327h-1V329h-1V328h-1V327h-1V322h-1V331h-1V323h-1V321h-1V324h-1V318h-1V325h-1V321h-1V327h-1V325h-1V325h-1V326h-1V321h-1V328h-1V337h-1V327h-1V327h-1V328h-1V333h-1V334h-1V320h-1V318h-1V322h-1V323h-1V329h-1V343h-1V335h-1V334h-1V327h-1V329h-1V332h-1V325h-1V330h-1V328h-1V328h-1V314h-1V322h-1V326h-1V332h-1V326h-1V334h-1V334h-1V331h-1V336h-1V325h-1V331h-1V327h-1V329h-1V327h-1V333h-1V333h-1V333h-1V331h-1V341h-1V343h-1V328h-1V320h-1V319h-1V325h-1V323h-1V328h-1V327h-1V327h-1V334h-1V327h-1V326h-1V338h-1V326h-1V322h-1V319h-1V333h-1V329h-1V330h-1V335h-1V334h-1V338h-1V333h-1V330h-1V328h-1V338h-1V327h-1V328h-1V328h-1V326h-1V326h-1V322h-1V320h-1V327h-1V324h-1V327h-1V339h-1V336h-1V327h-1V330h-1V327h-1V327h-1V310h-1V324h-1V336h-1V329h-1V322h-1V321h-1V330h-1V321h-1V334h-1V321h-1V336h-1V327h-1V322h-1V335h-1V332h-1V336h-1V330h-1V343h-1V333h-1V332h-1V331h-1V337h-1V329h-1V307h-1V301h-1V303h-1V301h-1V304h-1V317h-1V301h-1V323h-1V314h-1V305h-1V321h-1V304h-1V306h-1V307h-1V323h-1V306h-1V302h-1V318h-1V305h-1V326h-1V306h-1V323h-1V315h-1V304h-1V306h-1V301h-1V303h-1V306h-1V301h-1V301h-1V302h-1V303h-1V302h-1V304h-1V302h-1V303h-1V304h-1V302h-1V308h-1V304h-1V303h-1V305h-1V306h-1V305h-1V306h-1V303h-1V304h-1V305h-1V306h-1V306h-1V307h-1V305h-1V301h-1V302h-1V303h-1V306h-1V305h-1V308h-1V302h-1V304h-1V303h-1V306h-1V321h-1V316h-1V317h-1V318h-1V315h-1V320h-1V319h-1V319h-1V320h-1V320h-1V318h-1V316h-1V318h-1V317h-1V330h-1V333h-1V326h-1V339h-1V332h-1V333h-1V319h-1V337h-1V330h-1V326h-1V329h-1V326h-1V317h-1V343h-1V336h-1V337h-1V341h-1V331h-1V333h-1V329h-1V332h-1V329h-1V330h-1V341h-1V331h-1V324h-1V324h-1V336h-1V312h-1V332h-1V327h-1V321h-1V332h-1V339h-1V330h-1V338h-1V332h-1V330h-1V331h-1V330h-1V326h-1V324h-1V331h-1V322h-1V330h-1V330h-1V341h-1V328h-1V325h-1V322h-1V318h-1V320h-1V319h-1V334h-1V324h-1V334h-1V315h-1V327h-1V326h-1V322h-1V331h-1V327h-1V318h-1V322h-1V325h-1V330h-1V326h-1V335h-1V327h-1V328h-1V329h-1V343h-1V330h-1V327h-1V330h-1V326h-1V331h-1V332h-1V333h-1V332h-1V328h-1V329h-1V331h-1V331h-1V333h-1V333h-1V335h-1V334h-1V334h-1V319h-1V331h-1V328h-1V333h-1V332h-1V330h-1V327h-1V330h-1V328h-1V311h-1V326h-1V331h-1V334h-1V336h-1V317h-1V332h-1V334h-1V320h-1V331h-1V316h-1V335h-1V331h-1V335h-1V334h-1V334h-1V333h-1V332h-1V336h-1V335h-1V336h-1V335h-1V334h-1V332h-1V330h-1V332h-1V313h-1V328h-1V331h-1V326h-1V325h-1V312h-1V330h-1V326h-1V325h-1V312h-1V326h-1V324h-1V329h-1V331h-1V329h-1V330h-1V330h-1V329h-1V317h-1V328h-1V327h-1V307h-1V327h-1V327h-1V310h-1V312h-1V312h-1V332h-1V331h-1V327h-1V330h-1V332h-1V330h-1V329h-1V331h-1V316h-1V319h-1V321h-1V327h-1V321h-1V331h-1V331h-1V327h-1V322h-1V330h-1V332h-1V327h-1V313h-1V335h-1V324h-1V335h-1V331h-1V334h-1V329h-1V333h-1V334h-1V330h-1V329h-1V328h-1V332h-1V317h-1V334h-1V342h-1V326h-1V329h-1V330h-1V329h-1V333h-1V327h-1V326h-1V332h-1V323h-1V341h-1V330h-1V342h-1V332h-1V333h-1V334h-1V334h-1V330h-1V319h-1V326h-1V323h-1V322h-1V325h-1V321h-1V320h-1V322h-1V320h-1V332h-1V327h-1V313h-1V325h-1V330h-1V333h-1V329h-1V330h-1V322h-1V335h-1V336h-1V330h-1V327h-1V333h-1V340h-1V332h-1V330h-1V326h-1V332h-1V335h-1V337h-1V336h-1V334h-1V331h-1V338h-1V338h-1V330h-1V328h-1V334h-1V327h-1V328h-1V330h-1V332h-1V334h-1V334h-1V332h-1V339h-1V331h-1V331h-1V331h-1V331h-1V284h-1V286h-1V297h-1V289h-1V298h-1V284h-1V286h-1V291h-1V285h-1V289h-1V291h-1V293h-1V292h-1V304h-1V313h-1V297h-1V298h-1V283h-1V291h-1V295h-1V288h-1V287h-1V301h-1V298h-1V293h-1V298h-1V293h-1V295h-1V294h-1V296h-1V300h-1V298h-1V296h-1V292h-1V309h-1V293h-1V304h-1V302h-1V286h-1V286h-1V297h-1V285h-1V297h-1V286h-1V293h-1V286h-1V285h-1V285h-1V298h-1V284h-1V286h-1V291h-1V292h-1V284h-1V287h-1V287h-1V294h-1V290h-1V293h-1V289h-1V289h-1V286h-1V283h-1V294h-1V289h-1Z" fill="url(#selbg)"/>
    <path d="M219 417V417h1V419h1V415h1V417h1V414h1V413h1V404h1V416h1V408h1V418h1V418h1V419h1V412h1V419h1V417h1V416h1V418h1V416h1V418h1V416h1V412h1V419h1V417h1V416h1V415h1V418h1V416h1V406h1V407h1V396h1V409h1V404h1V391h1V392h1V407h1V403h1V408h1V406h1V403h1V409h1V410h1V410h1V399h1V414h1V414h1V415h1V417h1V416h1V417h1V414h1V412h1V395h1V397h1V407h1V402h1V415h1V410h1V415h1V416h1V419h1V409h1V415h1V415h1V418h1V419h1V369h1V369h1V368h1V369h1V369h1V369h1V375h1V365h1V378h1V379h1V372h1V373h1V378h1V373h1V364h1V373h1V374h1V377h1V381h1V382h1V376h1V370h1V377h1V363h1V373h1V377h1V378h1V378h1V374h1V376h1V380h1V382h1V382h1V378h1V383h1V382h1V381h1V395h1V376h1V366h1V378h1V377h1V370h1V370h1V376h1V379h1V377h1V393h1V381h1V381h1V380h1V363h1V377h1V364h1V367h1V368h1V367h1V374h1V373h1V376h1V378h1V373h1V365h1V372h1V366h1V377h1V377h1V367h1V380h1V366h1V375h1V379h1V375h1V378h1V372h1V373h1V372h1V388h1V374h1V360h1V364h1V373h1V376h1V372h1V365h1V376h1V373h1V377h1V372h1V371h1V375h1V372h1V368h1V376h1V374h1V371h1V373h1V375h1V376h1V379h1V375h1V384h1V373h1V371h1V370h1V371h1V371h1V358h1V375h1V374h1V372h1V376h1V377h1V372h1V376h1V368h1V371h1V368h1V372h1V361h1V367h1V364h1V366h1V364h1V372h1V367h1V372h1V368h1V363h1V375h1V375h1V361h1V371h1V369h1V374h1V367h1V373h1V374h1V376h1V375h1V387h1V377h1V379h1V362h1V374h1V376h1V371h1V364h1V372h1V373h1V375h1V375h1V375h1V379h1V373h1V364h1V370h1V377h1V383h1V381h1V383h1V379h1V375h1V360h1V377h1V376h1V374h1V374h1V376h1V380h1V385h1V373h1V364h1V367h1V368h1V369h1V382h1V374h1V359h1V369h1V375h1V372h1V358h1V366h1V371h1V369h1V370h1V367h1V366h1V368h1V371h1V370h1V367h1V372h1V371h1V361h1V372h1V372h1V365h1V365h1V364h1V358h1V358h1V366h1V358h1V365h1V371h1V370h1V362h1V372h1V370h1V371h1V372h1V368h1V375h1V368h1V374h1V374h1V371h1V366h1V365h1V369h1V358h1V380h1V370h1V358h1V365h1V362h1V367h1V364h1V380h1V369h1V372h1V368h1V368h1V375h1V372h1V367h1V390h1V375h1V372h1V367h1V358h1V367h1V372h1V376h1V371h1V375h1V365h1V376h1V371h1V365h1V369h1V372h1V381h1V378h1V363h1V379h1V379h1V375h1V377h1V380h1V377h1V379h1V387h1V370h1V363h1V358h1V393h1V398h1V395h1V399h1V395h1V395h1V397h1V399h1V397h1V398h1V393h1V396h1V397h1V398h1V398h1V394h1V395h1V395h1V396h1V397h1V397h1V392h1V392h1V397h1V393h1V395h1V396h1V395h1V397h1V393h1V392h1V398h1V392h1V398h1V398h1V397h1V399h1V395h1V396h1V378h1V378h1V396h1V384h1V395h1V379h1V396h1V398h1V387h1V396h1V396h1V394h1V384h1V396h1V379h1V385h1V395h1V378h1V396h1V395h1V393h1V393h1V395h1V377h1V382h1V380h1V370h1V367h1V376h1V378h1V368h1V380h1V378h1V379h1V374h1V378h1V377h1V370h1V361h1V362h1V374h1V368h1V377h1V368h1V369h1V372h1V373h1V379h1V367h1V374h1V375h1V382h1V383h1V376h1V379h1V374h1V377h1V373h1V379h1V373h1V375h1V368h1V372h1V371h1V375h1V370h1V369h1V372h1V370h1V370h1V375h1V369h1V380h1V373h1V371h1V373h1V377h1V371h1V378h1V377h1V372h1V378h1V377h1V364h1V367h1V374h1V377h1V381h1V374h1V379h1V365h1V372h1V371h1V370h1V369h1V375h1V361h1V375h1V359h1V372h1V375h1V369h1V366h1V362h1V370h1V366h1V377h1V379h1V381h1V374h1V381h1V379h1V397h1V379h1V379h1V368h1V381h1V381h1V378h1V373h1V366h1V373h1V368h1V377h1V385h1V376h1V373h1V380h1V384h1V372h1V383h1V379h1V365h1V382h1V372h1V377h1V380h1V377h1V376h1V380h1V374h1V382h1V377h1V384h1V380h1V384h1V380h1V380h1V385h1V370h1V369h1V370h1V382h1V382h1V382h1V377h1V383h1V377h1V378h1V360h1V367h1V381h1V381h1V383h1V367h1V372h1V377h1V368h1V369h1V367h1V382h1V369h1V370h1V373h1V375h1V377h1V378h1V374h1V373h1V378h1V374h1V372h1V377h1V376h1V375h1V377h1V398h1V398h1V370h1V371h1V367h1V367h1V358h1V373h1V364h1V367h1V369h1V363h1V367h1V364h1V358h1V364h1V369h1V365h1V360h1V373h1V366h1V369h1V372h1V373h1V374h1V365h1V370h1V374h1V379h1V376h1V367h1V364h1V377h1V379h1V372h1V376h1V372h1V374h1V374h1V372h1V372h1V369h1V361h1V370h1V375h1V377h1V377h1V390h1V366h1V380h1V378h1V367h1V368h1V369h1V370h1V358h1V370h1V373h1V370h1V370h1V369h1V362h1V367h1V370h1V372h1V367h1V371h1V358h1V486h-1V483h-1V495h-1V483h-1V481h-1V481h-1V487h-1V483h-1V491h-1V488h-1V488h-1V487h-1V489h-1V488h-1V491h-1V494h-1V493h-1V491h-1V492h-1V487h-1V502h-1V482h-1V496h-1V484h-1V481h-1V483h-1V488h-1V484h-1V503h-1V488h-1V493h-1V493h-1V489h-1V494h-1V493h-1V486h-1V491h-1V490h-1V483h-1V486h-1V489h-1V479h-1V489h-1V496h-1V499h-1V484h-1V484h-1V489h-1V486h-1V500h-1V490h-1V483h-1V484h-1V483h-1V479h-1V479h-1V491h-1V485h-1V495h-1V480h-1V481h-1V478h-1V487h-1V488h-1V488h-1V493h-1V458h-1V458h-1V487h-1V497h-1V490h-1V495h-1V487h-1V489h-1V491h-1V494h-1V491h-1V484h-1V490h-1V483h-1V492h-1V497h-1V482h-1V486h-1V484h-1V491h-1V499h-1V488h-1V488h-1V485h-1V482h-1V489h-1V480h-1V477h-1V484h-1V479h-1V483h-1V489h-1V471h-1V483h-1V488h-1V488h-1V494h-1V479h-1V487h-1V482h-1V494h-1V487h-1V487h-1V489h-1V488h-1V487h-1V482h-1V491h-1V483h-1V481h-1V484h-1V478h-1V485h-1V481h-1V487h-1V485h-1V485h-1V486h-1V481h-1V488h-1V497h-1V487h-1V487h-1V488h-1V493h-1V494h-1V480h-1V478h-1V482h-1V483h-1V489h-1V503h-1V495h-1V494h-1V487h-1V489h-1V492h-1V485h-1V490h-1V488h-1V488h-1V474h-1V482h-1V486h-1V492h-1V486h-1V494h-1V494h-1V491h-1V496h-1V485h-1V491h-1V487h-1V489h-1V487h-1V493h-1V493h-1V493h-1V491h-1V501h-1V503h-1V488h-1V480h-1V479h-1V485h-1V483h-1V488h-1V487h-1V487h-1V494h-1V487h-1V486h-1V498h-1V486h-1V482h-1V479h-1V493h-1V489h-1V490h-1V495h-1V494h-1V498h-1V493h-1V490h-1V488h-1V498h-1V487h-1V488h-1V488h-1V486h-1V486h-1V482h-1V480h-1V487h-1V484h-1V487h-1V499h-1V496h-1V487h-1V490h-1V487h-1V487h-1V470h-1V484h-1V496h-1V489h-1V482h-1V481h-1V490h-1V481h-1V494h-1V481h-1V496h-1V487h-1V482h-1V495h-1V492h-1V496h-1V490h-1V503h-1V493h-1V492h-1V491h-1V497h-1V489h-1V467h-1V461h-1V463h-1V461h-1V464h-1V477h-1V461h-1V483h-1V474h-1V465h-1V481h-1V464h-1V466h-1V467h-1V483h-1V466h-1V462h-1V478h-1V465h-1V486h-1V466h-1V483h-1V475h-1V464h-1V466h-1V461h-1V463h-1V466h-1V461h-1V461h-1V462h-1V463h-1V462h-1V464h-1V462h-1V463h-1V464h-1V462h-1V468h-1V464h-1V463h-1V465h-1V466h-1V465h-1V466h-1V463h-1V464h-1V465h-1V466h-1V466h-1V467h-1V465h-1V461h-1V462h-1V463h-1V466h-1V465h-1V468h-1V462h-1V464h-1V463h-1V466h-1V481h-1V476h-1V477h-1V478h-1V475h-1V480h-1V479h-1V479h-1V480h-1V480h-1V478h-1V476h-1V478h-1V477h-1V490h-1V493h-1V486h-1V499h-1V492h-1V493h-1V479h-1V497h-1V490h-1V486h-1V489h-1V486h-1V477h-1V503h-1V496h-1V497h-1V501h-1V491h-1V493h-1V489h-1V492h-1V489h-1V490h-1V501h-1V491h-1V484h-1V484h-1V496h-1V472h-1V492h-1V487h-1V481h-1V492h-1V499h-1V490h-1V498h-1V492h-1V490h-1V491h-1V490h-1V486h-1V484h-1V491h-1V482h-1V490h-1V490h-1V501h-1V488h-1V485h-1V482h-1V478h-1V480h-1V479h-1V494h-1V484h-1V494h-1V475h-1V487h-1V486h-1V482h-1V491h-1V487h-1V478h-1V482h-1V485h-1V490h-1V486h-1V495h-1V487h-1V488h-1V489h-1V503h-1V490h-1V487h-1V490h-1V486h-1V491h-1V492h-1V493h-1V492h-1V488h-1V489h-1V491h-1V491h-1V493h-1V493h-1V495h-1V494h-1V494h-1V479h-1V491h-1V488h-1V493h-1V492h-1V490h-1V487h-1V490h-1V488h-1V471h-1V486h-1V491h-1V494h-1V496h-1V477h-1V492h-1V494h-1V480h-1V491h-1V476h-1V495h-1V491h-1V495h-1V494h-1V494h-1V493h-1V492h-1V496h-1V495h-1V496h-1V495h-1V494h-1V492h-1V490h-1V492h-1V473h-1V488h-1V491h-1V486h-1V485h-1V472h-1V490h-1V486h-1V485h-1V472h-1V486h-1V484h-1V489h-1V491h-1V489h-1V490h-1V490h-1V489h-1V477h-1V488h-1V487h-1V467h-1V487h-1V487h-1V470h-1V472h-1V472h-1V492h-1V491h-1V487h-1V490h-1V492h-1V490h-1V489h-1V491h-1V476h-1V479h-1V481h-1V487h-1V481h-1V491h-1V491h-1V487h-1V482h-1V490h-1V492h-1V487h-1V473h-1V495h-1V484h-1V495h-1V491h-1V494h-1V489h-1V493h-1V494h-1V490h-1V489h-1V488h-1V492h-1V477h-1V494h-1V502h-1V486h-1V489h-1V490h-1V489h-1V493h-1V487h-1V486h-1V492h-1V483h-1V501h-1V490h-1V502h-1V492h-1V493h-1V494h-1V494h-1V490h-1V479h-1V486h-1V483h-1V482h-1V485h-1V481h-1V480h-1V482h-1V480h-1V492h-1V487h-1V473h-1V485h-1V490h-1V493h-1V489h-1V490h-1V482h-1V495h-1V496h-1V490h-1V487h-1V493h-1V500h-1V492h-1V490h-1V486h-1V492h-1V495h-1V497h-1V496h-1V494h-1V491h-1V498h-1V498h-1V490h-1V488h-1V494h-1V487h-1V488h-1V490h-1V492h-1V494h-1V494h-1V492h-1V499h-1V491h-1V491h-1V491h-1V491h-1V444h-1V446h-1V457h-1V449h-1V458h-1V444h-1V446h-1V451h-1V445h-1V449h-1V451h-1V453h-1V452h-1V464h-1V473h-1V457h-1V458h-1V443h-1V451h-1V455h-1V448h-1V447h-1V461h-1V458h-1V453h-1V458h-1V453h-1V455h-1V454h-1V456h-1V460h-1V458h-1V456h-1V452h-1V469h-1V453h-1V464h-1V462h-1V446h-1V446h-1V457h-1V445h-1V457h-1V446h-1V453h-1V446h-1V445h-1V445h-1V458h-1V444h-1V446h-1V451h-1V452h-1V444h-1V447h-1V447h-1V454h-1V450h-1V453h-1V449h-1V449h-1V446h-1V443h-1V454h-1V449h-1Z" fill="url(#selbg)"/>
  </g>
  <path d="M219 202.5H845M219 340.5H845M219 360.5H845M219 500.5H845" stroke="#6f8198" stroke-width="1"/>
  <path d="M357 188h6l-6 5z M457 188h-6l6 5z M357 507l6 6h-6z M457 507v6h-6z" fill="#f3e300"/>
</svg>
<div class="a" style="left:845px;top:178px;width:37px;height:361px;background:#fff"></div>
<div class="a" style="left:845px;top:188px;width:1px;height:325px;background:#9a9a9a"></div>
<div class="a" style="left:882px;top:178px;width:17px;height:359px;background:#000"></div>
<div class="a" style="left:858.2px;top:203.1px;font-size:9.5px;line-height:9.5px;color:#1f2f5c;transform:scaleX(0.9701);transform-origin:0 0;">-1</div>
<div class="a" style="left:858.2px;top:214.0px;font-size:9.5px;line-height:9.5px;color:#1f2f5c;transform:scaleX(0.9701);transform-origin:0 0;">-2</div>
<div class="a" style="left:858.2px;top:224.9px;font-size:9.5px;line-height:9.5px;color:#1f2f5c;transform:scaleX(0.9701);transform-origin:0 0;">-4</div>
<div class="a" style="left:858.2px;top:235.8px;font-size:9.5px;line-height:9.5px;color:#1f2f5c;transform:scaleX(0.9701);transform-origin:0 0;">-7</div>
<div class="a" style="left:858.2px;top:246.6px;font-size:9.5px;line-height:9.5px;color:#1f2f5c;transform:scaleX(1.0557);transform-origin:0 0;">-10</div>
<div class="a" style="left:858.2px;top:257.5px;font-size:9.5px;line-height:9.5px;color:#1f2f5c;transform:scaleX(1.0557);transform-origin:0 0;">-16</div>
<div class="a" style="left:858.2px;top:268.4px;font-size:9.5px;line-height:9.5px;color:#1f2f5c;transform:scaleX(1.0557);transform-origin:0 0;">-90</div>
<div class="a" style="left:858.2px;top:279.3px;font-size:9.5px;line-height:9.5px;color:#1f2f5c;transform:scaleX(1.0557);transform-origin:0 0;">-16</div>
<div class="a" style="left:858.2px;top:290.2px;font-size:9.5px;line-height:9.5px;color:#1f2f5c;transform:scaleX(1.0557);transform-origin:0 0;">-10</div>
<div class="a" style="left:858.2px;top:301.0px;font-size:9.5px;line-height:9.5px;color:#1f2f5c;transform:scaleX(0.9701);transform-origin:0 0;">-7</div>
<div class="a" style="left:858.2px;top:311.9px;font-size:9.5px;line-height:9.5px;color:#1f2f5c;transform:scaleX(0.9701);transform-origin:0 0;">-4</div>
<div class="a" style="left:858.2px;top:322.8px;font-size:9.5px;line-height:9.5px;color:#1f2f5c;transform:scaleX(0.9701);transform-origin:0 0;">-2</div>
<div class="a" style="left:858.2px;top:333.7px;font-size:9.5px;line-height:9.5px;color:#1f2f5c;transform:scaleX(0.9701);transform-origin:0 0;">-1</div>
<div class="a" style="left:858.2px;top:360.1px;font-size:9.5px;line-height:9.5px;color:#1f2f5c;transform:scaleX(0.9701);transform-origin:0 0;">-1</div>
<div class="a" style="left:858.2px;top:371.0px;font-size:9.5px;line-height:9.5px;color:#1f2f5c;transform:scaleX(0.9701);transform-origin:0 0;">-2</div>
<div class="a" style="left:858.2px;top:382.0px;font-size:9.5px;line-height:9.5px;color:#1f2f5c;transform:scaleX(0.9701);transform-origin:0 0;">-4</div>
<div class="a" style="left:858.2px;top:392.9px;font-size:9.5px;line-height:9.5px;color:#1f2f5c;transform:scaleX(0.9701);transform-origin:0 0;">-7</div>
<div class="a" style="left:858.2px;top:403.8px;font-size:9.5px;line-height:9.5px;color:#1f2f5c;transform:scaleX(1.0557);transform-origin:0 0;">-10</div>
<div class="a" style="left:858.2px;top:414.7px;font-size:9.5px;line-height:9.5px;color:#1f2f5c;transform:scaleX(1.0557);transform-origin:0 0;">-16</div>
<div class="a" style="left:858.2px;top:425.6px;font-size:9.5px;line-height:9.5px;color:#1f2f5c;transform:scaleX(1.0557);transform-origin:0 0;">-90</div>
<div class="a" style="left:858.2px;top:436.6px;font-size:9.5px;line-height:9.5px;color:#1f2f5c;transform:scaleX(1.0557);transform-origin:0 0;">-16</div>
<div class="a" style="left:858.2px;top:447.5px;font-size:9.5px;line-height:9.5px;color:#1f2f5c;transform:scaleX(1.0557);transform-origin:0 0;">-10</div>
<div class="a" style="left:858.2px;top:458.4px;font-size:9.5px;line-height:9.5px;color:#1f2f5c;transform:scaleX(0.9701);transform-origin:0 0;">-7</div>
<div class="a" style="left:858.2px;top:469.3px;font-size:9.5px;line-height:9.5px;color:#1f2f5c;transform:scaleX(0.9701);transform-origin:0 0;">-4</div>
<div class="a" style="left:858.2px;top:480.2px;font-size:9.5px;line-height:9.5px;color:#1f2f5c;transform:scaleX(0.9701);transform-origin:0 0;">-2</div>
<div class="a" style="left:858.2px;top:491.2px;font-size:9.5px;line-height:9.5px;color:#1f2f5c;transform:scaleX(0.9701);transform-origin:0 0;">-1</div>
<svg style="left:0;top:0" width="900" height="603"><path d="M846 196.5h7M846 202.5h4M846 207.5h7M846 212.5h4M846 218.5h7M846 223.5h4M846 229.5h7M846 234.5h4M846 240.5h7M846 245.5h4M846 251.5h7M846 256.5h4M846 261.5h7M846 267.5h4M846 272.5h7M846 278.5h4M846 283.5h7M846 289.5h4M846 294.5h7M846 299.5h4M846 305.5h7M846 310.5h4M846 316.5h7M846 321.5h4M846 327.5h7M846 332.5h4M846 338.5h7M846 343.5h4M846 348.5h7M846 353.5h7M846 359.5h4M846 364.5h7M846 369.5h4M846 375.5h7M846 380.5h4M846 386.5h7M846 391.5h4M846 397.5h7M846 402.5h4M846 408.5h7M846 413.5h4M846 419.5h7M846 424.5h4M846 430.5h7M846 435.5h4M846 440.5h7M846 446.5h4M846 451.5h7M846 457.5h4M846 462.5h7M846 468.5h4M846 473.5h7M846 479.5h4M846 484.5h7M846 490.5h4M846 495.5h7M846 500.5h4M846 506.5h7" stroke="#222" stroke-width="1"/></svg>
<div class="a" style="left:855.2px;top:180.2px;font-size:10px;line-height:10px;color:#1f2f5c;transform:scaleX(1.0135);transform-origin:0 0;">dB</div>
<div class="a" style="left:219px;top:513px;width:626px;height:26px;background:#fff"></div>
<div class="a" style="left:219.2px;top:523.9px;font-size:11px;line-height:11px;color:#1f2f5c;transform:scaleX(0.9143);transform-origin:0 0;">hms</div>
<div class="a" style="left:303.2px;top:523.9px;font-size:11px;line-height:11px;color:#1f2f5c;transform:scaleX(0.8858);transform-origin:0 0;">0:50.0</div>
<div class="a" style="left:400.7px;top:523.9px;font-size:11px;line-height:11px;color:#1f2f5c;transform:scaleX(0.8858);transform-origin:0 0;">1:40.0</div>
<div class="a" style="left:498.2px;top:523.9px;font-size:11px;line-height:11px;color:#1f2f5c;transform:scaleX(0.8858);transform-origin:0 0;">2:30.0</div>
<div class="a" style="left:595.7px;top:523.9px;font-size:11px;line-height:11px;color:#1f2f5c;transform:scaleX(0.8858);transform-origin:0 0;">3:20.0</div>
<div class="a" style="left:693.2px;top:523.9px;font-size:11px;line-height:11px;color:#1f2f5c;transform:scaleX(0.8858);transform-origin:0 0;">4:10.0</div>
<div class="a" style="left:790.7px;top:523.9px;font-size:11px;line-height:11px;color:#1f2f5c;transform:scaleX(0.8858);transform-origin:0 0;">5:00.0</div>
<svg style="left:0;top:0" width="900" height="603"><path d="M220.5 514v6M239.5 514v4M259.5 514v4M278.5 514v4M298.5 514v4M317.5 514v6M337.5 514v4M356.5 514v4M376.5 514v4M395.5 514v4M415.5 514v6M434.5 514v4M454.5 514v4M473.5 514v4M493.5 514v4M512.5 514v6M532.5 514v4M551.5 514v4M571.5 514v4M590.5 514v4M610.5 514v6M629.5 514v4M649.5 514v4M668.5 514v4M688.5 514v4M707.5 514v6M727.5 514v4M746.5 514v4M766.5 514v4M785.5 514v4M805.5 514v6M824.5 514v4M844.5 514v4" stroke="#111" stroke-width="1"/></svg>

<!-- scrollbars -->
<div class="a" style="left:219px;top:539px;width:680px;height:12px;background:#efefef"></div>
<div class="a" style="left:219px;top:551px;width:680px;height:1px;background:#fff"></div>
<div class="a" style="left:219px;top:552px;width:680px;height:13px;background:#efefef"></div>
<div class="a" style="left:373px;top:539px;width:17px;height:12px;background:#cdcdcd"></div>
<div class="a" style="left:473px;top:552px;width:18px;height:13px;background:#cdcdcd"></div>
<svg style="left:0;top:0" width="900" height="603">
  <path d="M228.5 541.5l-3.5 3.8 3.5 3.8M228.5 554.5l-3.5 3.8 3.5 3.8M889 541.5l3.5 3.8-3.5 3.8M889 554.5l3.5 3.8-3.5 3.8" fill="none" stroke="#444" stroke-width="2"/>
</svg>
<div class="a" style="left:899px;top:0;width:1px;height:603px;background:#b8b8b8"></div>

<!-- BOTTOM BAR -->
<div class="a" style="left:1px;top:565px;width:898px;height:38px;background:linear-gradient(#f9f9f9,#ececec 55%,#dedede);border-top:1px solid #d2d2d2;border-bottom:2px solid #b3b3b3"></div>
<div class="tb" style="left:8.5px"></div>
<div class="tb" style="left:33.0px"></div>
<div class="tb" style="left:66.0px"></div>
<div class="tb" style="left:90.0px"></div>
<div class="tb" style="left:114.0px"></div>
<div class="tb" style="left:138.5px"></div>
<div class="tb" style="left:163.0px"></div>
<div class="tb" style="left:195.0px"></div>
<div class="tb" style="left:220.0px"></div>
<div class="tb" style="left:252.0px"></div>
<div class="a" style="left:285.5px;top:578.1px;font-size:11px;line-height:11px;color:#6b6b6b;font-weight:bold;text-shadow:0 1px 0 #fff;transform:scaleX(0.9549);transform-origin:0 0;">Selection</div>
<div class="a" style="left:525.2px;top:578.1px;font-size:11px;line-height:11px;color:#6b6b6b;font-weight:bold;text-shadow:0 1px 0 #fff;transform:scaleX(0.9271);transform-origin:0 0;">Length</div>
<div class="tm" style="left:346px;width:167px"></div>
<div class="tm" style="left:575px;width:166px"></div>
<div class="a" style="left:348.4px;top:575.8px;font-size:15px;line-height:15px;color:#fff;font-weight:bold;font-style:italic;transform:scaleX(0.8467);transform-origin:0 0;">0:01:10.152</div>
<div class="a" style="left:437.2px;top:575.8px;font-size:15px;line-height:15px;color:#fff;font-weight:bold;font-style:italic;transform:scaleX(0.8652);transform-origin:0 0;">0:02:01.078</div>
<div class="a" style="left:577.2px;top:575.8px;font-size:15px;line-height:15px;color:#fff;font-weight:bold;font-style:italic;transform:scaleX(0.8405);transform-origin:0 0;">0:00:50.925</div>
<div class="a" style="left:668.2px;top:575.8px;font-size:15px;line-height:15px;color:#fff;font-weight:bold;font-style:italic;transform:scaleX(0.8405);transform-origin:0 0;">0:05:19.583</div>

<svg style="left:0;top:0" width="900" height="603">
<defs>
  <linearGradient id="gBlueBox" x1="0" y1="0" x2="0" y2="1"><stop offset="0" stop-color="#6fb6f0"/><stop offset="1" stop-color="#1f6fc4"/></linearGradient>
  <linearGradient id="gGrayBox" x1="0" y1="0" x2="0" y2="1"><stop offset="0" stop-color="#e9e9e9"/><stop offset="1" stop-color="#9d9d9d"/></linearGradient>
  <linearGradient id="gFolder" x1="0" y1="0" x2="0" y2="1"><stop offset="0" stop-color="#7fb3e2"/><stop offset="1" stop-color="#2f72b8"/></linearGradient>
  <radialGradient id="gDisk" cx="0.45" cy="0.4" r="0.6"><stop offset="0" stop-color="#8fc0ff"/><stop offset="1" stop-color="#2a5fc0"/></radialGradient>
  <linearGradient id="gOrange" x1="0" y1="0" x2="0" y2="1"><stop offset="0" stop-color="#ffb347"/><stop offset="1" stop-color="#e8670f"/></linearGradient>
  <radialGradient id="gCube" cx="0.4" cy="0.35" r="0.7"><stop offset="0" stop-color="#b9e36b"/><stop offset="1" stop-color="#3f9a2c"/></radialGradient>
  <!-- tray -->
  <g id="tray"><path d="M1.5 9.5h14l1 5.5h-16z" fill="#fafafa" stroke="#6e6e6e" stroke-width="1"/><rect x="1" y="13.5" width="15.5" height="3" rx="1" fill="#8a8a8a"/></g>
  <g id="noise"><path d="M2 11l1-4 1 2 1-5 1 3 1-4 1 3 1-2 1 4 1-5 1 3 1-2 1 4 1-2 1 5z" fill="#4a3ad8" stroke="#6b4dff" stroke-width=".6"/></g>
  <g id="people">
    <path d="M5 17q6-4 12 0v5H5zM14 17q6-4 12 0v5H14z" fill="#3b86d8"/>
    <ellipse cx="11" cy="8" rx="4.6" ry="5" fill="#a9481a"/><ellipse cx="11" cy="9.3" rx="3.4" ry="3.6" fill="#f3c89a"/>
    <ellipse cx="20" cy="8" rx="4.6" ry="5" fill="#a9481a"/><ellipse cx="20" cy="9.3" rx="3.4" ry="3.6" fill="#f3c89a"/>
    <path d="M0.5 31v-4q0-5 6.5-5t6.5 5v4z" fill="#3b86d8"/><path d="M17.5 31v-4q0-5 6.5-5t6.5 5v4z" fill="#3b86d8"/>
    <path d="M9 31v-4q0-5 6.5-5t6.5 5v4z" fill="#f0a01c"/>
    <ellipse cx="7" cy="18" rx="4.6" ry="5" fill="#a9481a"/><ellipse cx="7" cy="19.3" rx="3.4" ry="3.6" fill="#f3c89a"/>
    <ellipse cx="24" cy="18" rx="4.6" ry="5" fill="#a9481a"/><ellipse cx="24" cy="19.3" rx="3.4" ry="3.6" fill="#f3c89a"/>
    <ellipse cx="15.5" cy="18" rx="4.6" ry="5" fill="#a9481a"/><ellipse cx="15.5" cy="19.3" rx="3.4" ry="3.6" fill="#f3c89a"/>
  </g>
  <g id="cross1"><path d="M14 3.5C9 6 8 11 3 13.5" fill="none" stroke="#2a62c4" stroke-width="3.2"/><path d="M16.5 .5L9.5 1.5L15.5 7.5Z M.5 16.5L7.5 15.5L1.5 9.5Z" fill="#2a62c4"/><path d="M3 3.5C8 6 9 11 14 13.5" fill="none" stroke="#45b22c" stroke-width="3.2"/><path d="M.5 .5L7.5 1.5L1.5 7.5Z M16.5 16.5L9.5 15.5L15.5 9.5Z" fill="#45b22c"/><path d="M0 8.5H17" stroke="#f26a2a" stroke-width="1.3"/></g>
  <g id="cross2"><path d="M3 3.5C8 6 9 11 14 13.5" fill="none" stroke="#2a62c4" stroke-width="3.2"/><path d="M3 3.5C5 4.5 6 6 7 7.5" fill="none" stroke="#6cc24a" stroke-width="3.2"/><path d="M.5 .5L7.5 1.5L1.5 7.5Z" fill="#6cc24a"/><path d="M16.5 16.5L9.5 15.5L15.5 9.5Z" fill="#2a62c4"/><path d="M14 3.5C9 6 8 11 3 13.5" fill="none" stroke="#f0862a" stroke-width="3.2"/><path d="M16.5 .5L9.5 1.5L15.5 7.5Z M.5 16.5L7.5 15.5L1.5 9.5Z" fill="#f0862a"/></g>
  <g id="rev"><path d="M.5 1l2.5 6 2.5-5 2.5 5 2.5-5 2.5 5 2.5-6" fill="none" stroke="#7acb86" stroke-width="1.8"/><path d="M15 6.5q2 7-6 7.5H6.5" fill="none" stroke="#2550a8" stroke-width="3.2"/><path d="M.5 14L7.5 9.5V18.5Z" fill="#2550a8"/></g>
  <g id="eqbox"><rect x=".5" y=".5" width="16" height="16" rx="2" fill="url(#gGrayBox)" stroke="#7a7a7a"/><rect x="2.5" y="2.5" width="12" height="12" fill="#f4f4f4"/></g>
  <g id="speedarrows" fill="none" stroke="#f0650f" stroke-width="2.4"><path d="M1.5 7.5V1.5H7.5M1.5 1.5L8 8"/><path d="M27.5 7.5V1.5H21.5M27.5 1.5L21 8"/><path d="M1.5 23.5V29.5H7.5M1.5 29.5L8 23"/><path d="M27.5 23.5V29.5H21.5M27.5 29.5L21 23"/></g>
  <g id="note"><ellipse cx="11" cy="22.5" rx="5" ry="1.2" fill="#000" opacity=".15"/><path d="M14 2.5V20" stroke="#1e88e0" stroke-width="2.2"/><path d="M14 2q1.5 5 6 7.5q2 2 1 5q-2-4-7-5z" fill="#2f95e8"/><circle cx="11" cy="20.5" r="4.3" fill="url(#gDisk)"/></g>
</defs>

<!-- title bar icons -->
<path d="M9 9.5h7v9h-7z" fill="#74d24a"/><path d="M8 11q-1 5 2 7" fill="none" stroke="#2d7fd8" stroke-width="2"/>
<path d="M4.5 16.5l5.5-2.5 7 2.5-1 7.5-6 2-5-2.5z" fill="#c9a57a"/><path d="M10 14v12M4.5 16.5l5.5 3 7-3" fill="none" stroke="#9a7444" stroke-width=".8"/>
<path d="M14 15q2 5-1 9" fill="none" stroke="#2d84e0" stroke-width="2"/><circle cx="12.5" cy="24" r="1.8" fill="#2d84e0"/>
<rect x="24" y="11.5" width="1" height="14" fill="#777"/>
<path d="M33.5 9.5h10l4.5 4.5v12h-14.5z" fill="#f7f7f7" stroke="#8a8a8a"/><path d="M43.5 9.5v4.5h4.5" fill="#ddd" stroke="#8a8a8a"/>
<path d="M35 18l4-3v2h7v3h-7v2z" fill="#6a4cf0"/>
<path d="M59.5 9.5h8l3 3v5h-11z" fill="#eee" stroke="#888"/><path d="M60 14l3-2v1h6v2h-6v1z" fill="#6a4cf0"/>
<path d="M57 17.5h5l1.5-1.5h9v10h-15.5z" fill="url(#gFolder)" stroke="#1e5a98"/>
<rect x="81.5" y="9.5" width="15" height="16.5" rx="1" fill="#1b2766" stroke="#0f1850"/>
<rect x="84" y="10.5" width="10" height="7" fill="#c9c3f5"/><path d="M85 14l2.5-2v1h4v2h-4v1z" fill="#6a4cf0"/>
<rect x="85" y="20" width="8" height="6" fill="#f5f5f5"/><rect x="86.5" y="21" width="2" height="4" fill="#1b2766"/>
<path d="M108 13.5q9-4 12.5 4 0.5 3-1 6" fill="none" stroke="#3d8fe0" stroke-width="2.4"/><path d="M105 11v7h7z" fill="#3d8fe0"/>
<path d="M143 13.5q-9-4-12.5 4-.5 3 1 6" fill="none" stroke="#dcdcdc" stroke-width="2.4"/><path d="M146 11v7h-7z" fill="#dcdcdc"/>
<rect x="153" y="11.5" width="1.2" height="14.5" fill="#777"/>
<rect x="161" y="14.5" width="8" height="1.5" fill="#222"/><path d="M161.5 17.5h7l-3.5 4z" fill="#222"/>
<!-- app button cube -->
<path d="M22 44l7-3 7 3v10l-7 4-7-4z" fill="url(#gCube)"/>
<path d="M22 44l7 3v11l-7-4z" fill="#2f7fd0"/><path d="M22 44l7-3 7 3-7 3z" fill="#8fd3f0"/>
<path d="M31 49v5M34 48v5" stroke="#fff" stroke-width="1" opacity=".9"/>
<!-- collapse ribbon -->
<path d="M882.8 48.8L886.6 44.6L890.4 48.8L889 51.2L886.6 48.6L884.2 51.2Z" fill="#fff" stroke="#6a6a6a" stroke-width="1.1" stroke-linejoin="round"/>

<!-- Echo stopwatch -->
<rect x="24" y="83" width="3.5" height="2" fill="#8c8c8c"/>
<circle cx="25.8" cy="93" r="7.3" fill="#a6a6a6" stroke="#7a7a7a" stroke-width=".8"/>
<circle cx="25.8" cy="93" r="5.6" fill="url(#gDisk)"/>
<path d="M25.8 89v4h4" fill="none" stroke="#fff" stroke-width="1"/><path d="M25.8 93h5" stroke="#e85a1a" stroke-width="1.6"/>
<!-- Vibrato -->
<path d="M18 126h4l5-4v14l-5-4h-4z" fill="#7c7c7c"/><path d="M18 126h4v6h-4z" fill="#3b3b3b"/>
<path d="M29 122q2 2 0 4t0 4 0 4" fill="none" stroke="#79c88a" stroke-width="1.2"/>
<path d="M31.5 123q2 2 0 4t0 4 0 4" fill="none" stroke="#4a7fd0" stroke-width="1.2"/>
<path d="M34 124q2 2 0 4t0 4 0 3" fill="none" stroke="#3a62b8" stroke-width="1.2"/>
<!-- Amplify -->
<rect x="113.5" y="78.5" width="27.5" height="27" rx="3" fill="#6a6a6a"/>
<rect x="115.5" y="80.5" width="23.5" height="23" rx="1.5" fill="#f0f0f0"/>
<rect x="117" y="82" width="20.5" height="20" fill="#c6d6e6"/>
<path d="M118 101q5-16 12-18.5q5 1 8 7" fill="none" stroke="#2222ff" stroke-width="1.8"/>
<path d="M130 84v18" stroke="#222" stroke-width="1" stroke-dasharray="1.5 1.5"/><circle cx="130" cy="83.5" r="1.8" fill="#ff7a1a"/>
<!-- Fade / Fade In / Fade Out -->
<g transform="translate(168,75)"><use href="#tray"/><use href="#noise"/></g>
<g transform="translate(168,102)"><use href="#tray"/><use href="#noise"/><path d="M2 13q3-11 14-12" fill="none" stroke="#ee6a1e" stroke-width="1.4"/></g>
<g transform="translate(168,129)"><use href="#tray"/><use href="#noise"/><path d="M1 1q11 1 14 12" fill="none" stroke="#ee6a1e" stroke-width="1.4"/></g>
<!-- Normalize -->
<path d="M253.5 80.5v-5.5h15.5v5.5M253.5 85.5v5.5h15.5v-5.5" fill="none" stroke="#6b5a1a" stroke-width="2.6"/>
<path d="M253.5 80.5v-5.5h15.5v5.5M253.5 85.5v5.5h15.5v-5.5" fill="none" stroke="#e0b830" stroke-width="1.3"/>
<rect x="255" y="76.5" width="12.5" height="13" fill="#f4f6f8"/>
<path d="M255.5 86l1.5-8 1.5 9 1.5-9 1.5 9 1.5-9 1.5 9 1.5-8" fill="none" stroke="#2a4cc0" stroke-width="1.1"/><path d="M256 83h11" stroke="#6cc27a" stroke-width=".6"/>
<!-- Envelope -->
<g transform="translate(252,102)"><use href="#tray"/><path d="M2 12l2-3 2 1 2-2 3 0 2-3 2-2v9z" fill="#2b5fa8"/><path d="M2 9l5-3 6-1 4-4" fill="none" stroke="#f0a030" stroke-width="1"/><circle cx="2" cy="9" r="1.2" fill="#2a62d0"/><circle cx="9" cy="5.5" r="1.2" fill="#2a62d0"/><circle cx="16" cy="1.5" r="1.2" fill="#2a62d0"/></g>
<!-- Compressor -->
<rect x="254" y="130" width="10" height="15" fill="url(#gBlueBox)"/><path d="M255 144l1.5-10 2 9 2-9 2 10" fill="none" stroke="#1b4a98" stroke-width="1"/>
<rect x="263.5" y="129.5" width="6" height="16" rx="1" fill="#ee7a1e"/><path d="M266.5 132v4M266.5 139v4" stroke="#fff" stroke-width="1.2"/>
<circle cx="254" cy="130" r="1.2" fill="none" stroke="#2a62d0"/><circle cx="254" cy="145" r="1.2" fill="none" stroke="#2a62d0"/>
<!-- Chorus -->
<g transform="translate(362.5,76)"><use href="#people"/></g>
<!-- Flanger -->
<g transform="translate(417,75)"><use href="#tray"/><path d="M3 11q0-9 5-9t5 9" fill="none" stroke="#3a62b8" stroke-width="1.1"/><path d="M2 8q5-4 8 0t7-4" fill="none" stroke="#e85a2a" stroke-width="1"/></g>
<!-- Phaser -->
<rect x="417.5" y="101.5" width="16.5" height="16.5" rx="2" fill="#9a9a9a" stroke="#6e6e6e"/><rect x="419.5" y="103.5" width="12.5" height="12.5" fill="url(#gBlueBox)"/>
<path d="M420 115q3-1 4-8t2-3 2 3 4 8" fill="#ffffff" opacity=".5"/><path d="M420 116q3-1 4-9 1-3 2-3t2 3q1 8 4 9" fill="none" stroke="#fff" stroke-width="1"/><circle cx="421" cy="106" r="1" fill="#f08030"/><circle cx="431" cy="106" r="1" fill="#f08030"/>
<!-- Reverb -->
<path d="M426 129.8a9 9 0 0 1 8 7M426 132.6a6.5 6.5 0 0 1 5.5 4.6" fill="none" stroke="#4cae4c" stroke-width="1.3"/>
<path d="M423.5 146.5a10.5 10.5 0 0 1 10.5-8M427 146.5a7.5 7.5 0 0 1 7-5.2M430.5 146.5a4 4 0 0 1 3.5-2.5" fill="none" stroke="#3a62b8" stroke-width="1.3"/>
<path d="M418 135h5v-3l5.5 4.5-5.5 4.5v-3h-5z" fill="#f07a22"/>
<!-- Speed change -->
<g transform="translate(503,78)"><use href="#speedarrows"/><use href="#note" transform="translate(-1,-1) scale(1.1)"/></g>
<!-- Pitch change -->
<rect x="569.5" y="79.5" width="22" height="25" fill="url(#gBlueBox)" stroke="#24407a"/>
<path d="M575 83v7q0 4 3.5 4t3.5-4v-7M578.5 94v9" fill="none" stroke="#1d6b3a" stroke-width="1.6"/>
<rect x="589" y="78" width="11" height="28" rx="3" fill="#22488f"/>
<path d="M594.5 81l3 4h-6zM594.5 103l3-4h-6z M593.5 85h2v3h-2zM593.5 96h2v3h-2z" fill="#fff"/>
<rect x="568" y="78" width="3" height="3" fill="#fff" stroke="#555" stroke-width=".6"/><rect x="568" y="103" width="3" height="3" fill="#fff" stroke="#555" stroke-width=".6"/>
<!-- Peak EQ / Equalizer -->
<g transform="translate(626.5,84.5)"><use href="#eqbox"/><path d="M4 12l1.5-8 1.5 8 1.5-6 1.5 6 1.5-8 1.5 8" fill="none" stroke="#2a5cc0" stroke-width="1"/><path d="M4 4v9M13 4v9" stroke="#888" stroke-width=".8"/><circle cx="4" cy="8" r="1.2" fill="#f0a030"/></g>
<g transform="translate(626.5,120.5)"><use href="#eqbox"/><path d="M5 3v11M8.5 3v11M12 3v11" stroke="#888" stroke-width="1"/><circle cx="5" cy="7" r="1.6" fill="#5ab0e8"/><circle cx="8.5" cy="11" r="1.6" fill="#f0a030"/><circle cx="12" cy="6" r="1.6" fill="#6cc24a"/></g>
<!-- small filter icons -->
<path d="M712 83q2-1 3 0l2-7 2 13 2-10 1.5 6 1-2q2 0 3.5 0" fill="none" stroke="#2a5cc0" stroke-width="1.1"/><circle cx="711.5" cy="82.5" r="1.6" fill="#e8d040" stroke="#8a7a20" stroke-width=".5"/><circle cx="726" cy="82.5" r="1.6" fill="#e8d040" stroke="#8a7a20" stroke-width=".5"/>
<g transform="translate(734,75)"><use href="#tray"/><path d="M3 11l2-5 2 3 2-6 2 5 2-2 2 5" fill="none" stroke="#2a5cc0" stroke-width="1.1"/><path d="M1 4.5h16" stroke="#f06a2a" stroke-width="1" stroke-dasharray="1.5 1"/></g>
<g transform="translate(710,101)"><use href="#tray"/><path d="M3 11l2-5 2 3 2-6 2 5 2-2 2 5" fill="none" stroke="#2a5cc0" stroke-width="1.1"/><path d="M1 1h16" stroke="#f06a2a" stroke-width="1" stroke-dasharray="1.5 1"/></g>
<g transform="translate(734,101)"><use href="#eqbox"/><path d="M5 3v11" stroke="#888"/><circle cx="5" cy="9" r="1.5" fill="#f0a030"/><path d="M11.5 3l3 3h-6zM11.5 14l3-3h-6z" fill="#2a5cc0"/><path d="M7 8.5h8" stroke="#f06a2a" stroke-dasharray="1.5 1"/></g>
<g transform="translate(710,129)"><use href="#tray"/><path d="M3 11l2-5 2 3 2-6 2 5 2-2 2 5" fill="none" stroke="#2a5cc0" stroke-width="1.1"/><path d="M1 11h16" stroke="#f06a2a" stroke-width="1" stroke-dasharray="1.5 1"/></g>
<g transform="translate(734,129)"><use href="#eqbox"/><path d="M5 3v11" stroke="#888"/><circle cx="5" cy="9" r="1.5" fill="#f0a030"/><path d="M11.5 3l3 3h-6zM11.5 14l3-3h-6z" fill="#2a5cc0"/><path d="M7 8.5h8" stroke="#f06a2a" stroke-dasharray="1.5 1"/></g>
<!-- extend effects -->
<g transform="translate(792,74.5)"><use href="#cross1"/></g>
<g transform="translate(792,101.5)"><use href="#cross2"/></g>
<g transform="translate(792,128.5)"><use href="#rev"/></g>

<!-- TREE ICONS -->
<g transform="translate(25,213)"><rect x=".5" y=".5" width="16" height="15.5" rx="2" fill="#9b9b9b" stroke="#6e6e6e"/><rect x="2.5" y="2.5" width="12" height="11.5" fill="#c9d8ea"/><path d="M3 13q3-9 8-10 3 1 3.5 4" fill="none" stroke="#2222ff" stroke-width="1.3"/><path d="M11 3v11" stroke="#333" stroke-width=".8"/><circle cx="11" cy="3.2" r="1.4" fill="#ff6a1a"/></g>
<g transform="translate(25,232)"><rect x="7" y="0" width="3" height="2" fill="#8c8c8c"/><circle cx="8.5" cy="9.5" r="7.5" fill="#a9a9a9" stroke="#7a7a7a" stroke-width=".8"/><circle cx="8.5" cy="9.5" r="5.8" fill="url(#gDisk)"/><path d="M8.5 6v3.5h3.5" fill="none" stroke="#fff" stroke-width="1"/><path d="M8.5 9.5h5" stroke="#e85a1a" stroke-width="1.6"/></g>
<g transform="translate(25,253)"><use href="#eqbox"/><path d="M5 3v11M8.5 3v11M12 3v11" stroke="#777" stroke-width="1"/><circle cx="5" cy="8" r="1.6" fill="#5ab0e8"/><circle cx="8.5" cy="11" r="1.6" fill="#f0a030"/><circle cx="12" cy="6" r="1.6" fill="#6cc24a"/></g>
<g transform="translate(25,273) scale(0.57)"><use href="#people"/></g>
<g transform="translate(25,293)"><rect x=".5" y=".5" width="15" height="15" rx="2" fill="#9a9a9a" stroke="#6e6e6e"/><rect x="2.5" y="2.5" width="11" height="11" fill="#3a6a9a"/><path d="M3 12l4-4 3 2 3-6" fill="none" stroke="#8fd06a" stroke-width="1.2"/><circle cx="13" cy="13" r="4" fill="#e85a1a" stroke="#fff" stroke-width=".8"/><path d="M11 11l4 4M15 11l-4 4" stroke="#fff" stroke-width="1.2"/></g>
<g transform="translate(25,314)"><path d="M1 8h5v-2.5l5 4.5-5 4.5v-2.5h-5z" fill="#f07a22"/><path d="M9 3q6 0 8 6M10 1q7 0 8 6" fill="none" stroke="#4cae4c" stroke-width="1.2"/><path d="M8 17q2-6 9-7M11 17q2-4 6-4" fill="none" stroke="#3a62b8" stroke-width="1.2"/></g>
<g transform="translate(25,333)"><use href="#cross1"/></g>
<g transform="translate(25,352) scale(0.6)"><use href="#speedarrows"/><use href="#note" transform="translate(5,4)"/></g>
<g transform="translate(25,373)"><path d="M2.5 .5h9l4 4v12h-13z" fill="#eeeeee" stroke="#8a8a8a"/><path d="M8 8h7v2h-7z" fill="#8a6af0"/><path d="M1 7h5v-2.5l5 4-5 4v-2.5h-5z" fill="#f07a22"/></g>
<g transform="translate(25,394)"><use href="#cross2"/></g>
<g transform="translate(25,414)"><use href="#rev"/></g>
<g transform="translate(25,435)"><rect x=".5" y=".5" width="16.5" height="16" rx="2" fill="url(#gGrayBox)" stroke="#7a7a7a"/><path d="M8.5 1v15" stroke="#777"/><path d="M4 5l4 3.5-4 3.5z" fill="#f07a22"/><rect x="10" y="9" width="5" height="1.5" fill="#6cc24a"/></g>
<!-- tree lines -->
<path d="M11.5 218.5l4 4-4 4M11.5 238.8l4 4-4 4M11.5 259.0l4 4-4 4M11.5 279.3l4 4-4 4M11.5 299.6l4 4-4 4M11.5 320.0l4 4-4 4M11.5 340.3l4 4-4 4M11.5 360.6l4 4-4 4M11.5 381.0l4 4-4 4" fill="none" stroke="#8c8c8c" stroke-width="1.4"/>
<path d="M14.5 227v8M14.5 247v8M14.5 268v8M14.5 288v8M14.5 308v8M14.5 329v8M14.5 349v8M14.5 369v8M14.5 390v55" stroke="#777" stroke-width="1" stroke-dasharray="1 2"/>
<path d="M20 221.5h5M20 241.5h5M20 262.5h5M20 282.5h5M20 302.5h5M20 323.5h5M20 343.5h5M20 363.5h5M20 384.5h5M15 404.5h10M15 424.5h10M15 445.5h10" stroke="#777" stroke-width="1" stroke-dasharray="1 2"/>

<!-- TRANSPORT glyphs -->
<g fill="#5f5f5f">
  <rect x="16" y="576" width="1.8" height="9"/><path d="M23.5 576v9l-5.5-4.5z"/>
  <path d="M44 576.5v8.5l-4.5-4.25zM49 576.5v8.5l-4.5-4.25z"/>
  <rect x="73.5" y="577.5" width="7" height="7"/>
  <path d="M99.5 576.5v8.5l4.5-4.25z"/>
  <path d="M121.5 578.5h5v-2l3 2.7-3 2.7v-2h-5zM128.5 583.5h-5v2l-3-2.7 3-2.7v2h5z"/>
  <path d="M144.5 578.5h4.5v-3l5 5.5-5 5.5v-3h-4.5z"/>
  <rect x="170.5" y="576.5" width="2.2" height="8.5"/><rect x="175.3" y="576.5" width="2.2" height="8.5"/>
  <path d="M202 576.5v8.5l4.5-4.25zM207 576.5v8.5l4.5-4.25z"/>
  <path d="M227.5 576.5v8.5l5-4.25z"/><rect x="233.5" y="576.5" width="1.8" height="8.5"/>
</g>
<text x="263.5" y="585.5" font-family="Liberation Sans" font-weight="bold" font-size="10.5" fill="#5f5f5f" text-anchor="middle">R</text>

<!-- ZOOM ICONS -->
<defs><radialGradient id="gLens" cx="0.4" cy="0.35" r="0.7"><stop offset="0" stop-color="#ffffff"/><stop offset="1" stop-color="#c5d8ea"/></radialGradient>
<g id="lens"><path d="M4.2 4.6L8 9.2" stroke="#3a3a3a" stroke-width="3.2" stroke-linecap="round"/><circle cx="0" cy="0" r="5.8" fill="url(#gLens)" stroke="#7b8c9c" stroke-width="1.5"/></g></defs>
<use href="#lens" x="774" y="580"/>
<path d="M779.5 574v8.5M775.3 578.3h8.5" stroke="#fff" stroke-width="4"/><path d="M779.5 574v8.5M775.3 578.3h8.5" stroke="#1f78d8" stroke-width="2.2"/>
<use href="#lens" x="796.5" y="580"/>
<path d="M797 578.3h9.5" stroke="#fff" stroke-width="4"/><path d="M797.5 578.3h8.5" stroke="#1f78d8" stroke-width="2.2"/>
<path d="M815.5 590.5v-5M815.5 590.5h13.5v-17h-8" fill="none" stroke="#1f5fd0" stroke-width="1.2" stroke-dasharray="2.2 1.3"/>
<use href="#lens" x="819.5" y="580"/>
<use href="#lens" x="841.5" y="580"/>
<path d="M836.5 579.5h6" stroke="#1f78d8" stroke-width="2.2"/><path d="M846.5 575.5l3.5 3.5-3.5 3.5-3.5-3.5z" fill="#fff" stroke="#1f78d8" stroke-width="1.6"/><circle cx="846.5" cy="579" r=".9" fill="#1f78d8"/>
<use href="#lens" x="863.5" y="580"/>
<path d="M860.5 579.5h6M863.5 576.5v6" stroke="#1f78d8" stroke-width="2"/>
<path d="M869.5 573.5l3.3 3.8h-6.6zM869.5 591l3.3-3.8h-6.6z" fill="#1f78d8"/><path d="M869.5 576v12" stroke="#1f78d8" stroke-width="2.4"/>
<use href="#lens" x="885.5" y="580"/>
<path d="M882.5 579.5h6" stroke="#1f78d8" stroke-width="2"/>
<path d="M891.5 573.5l3.3 3.8h-6.6zM891.5 591l3.3-3.8h-6.6z" fill="#1f78d8"/><path d="M891.5 576v12" stroke="#1f78d8" stroke-width="2.4"/>
</svg>

<!-- DIALOG -->
<div class="a" style="left:300px;top:192px;width:349px;height:279px;background:#f0f0f0;box-shadow:0 0 0 1px rgba(110,110,110,.55),6px 2px 10px -3px rgba(0,0,0,.45),-5px 2px 9px -4px rgba(0,0,0,.35)"></div>
<div class="a" style="left:300px;top:192px;width:349px;height:29px;background:#fff"></div>
<div class="a" style="left:324.2px;top:200.6px;font-size:12.5px;line-height:12.5px;color:#222;transform:scaleX(0.9474);transform-origin:0 0;">Echo</div>
<svg style="left:0;top:0" width="900" height="603"><!-- dialog title icon -->
<g transform="translate(301,190)"><path d="M9 9.5h7v9h-7z" fill="#74d24a"/><path d="M8 11q-1 5 2 7" fill="none" stroke="#2d7fd8" stroke-width="2"/>
<path d="M4.5 16.5l5.5-2.5 7 2.5-1 7.5-6 2-5-2.5z" fill="#c9a57a"/><path d="M10 14v12M4.5 16.5l5.5 3 7-3" fill="none" stroke="#9a7444" stroke-width=".8"/>
<path d="M14 15q2 5-1 9" fill="none" stroke="#2d84e0" stroke-width="2"/><circle cx="12.5" cy="24" r="1.8" fill="#2d84e0"/></g>
</svg>
<svg style="left:628px;top:201px" width="11" height="11"><path d="M0.5 0.5L10.5 10.5M10.5 0.5L0.5 10.5" stroke="#1a1a1a" stroke-width="1.1"/></svg>
<div class="a" style="left:398px;top:240px;width:42px;height:23px;background:#fff;border:1px solid #0078d7"></div>
<div class="a" style="left:401px;top:245px;width:20px;height:12px;background:#3399ff"></div>
<div class="a" style="left:398px;top:285px;width:42px;height:23px;background:#fff;border:1px solid #7a7a7a"></div>
<div class="a" style="left:398px;top:330px;width:42px;height:23px;background:#fff;border:1px solid #7a7a7a"></div>
<div class="trk" style="top:239px"></div>
<div class="thm" style="left:457px;top:237px"></div>
<div class="trk" style="top:284px"></div>
<div class="thm" style="left:566px;top:282px"></div>
<div class="trk" style="top:329px"></div>
<div class="thm" style="left:515px;top:327px"></div>
<div class="a" style="left:398px;top:385px;width:237px;height:22px;background:#e5e5e5;border:1px solid #acacac"></div>
<svg style="left:621px;top:394px" width="10" height="6"><path d="M0.5 0.5L5 5L9.5 0.5" fill="none" stroke="#333" stroke-width="1.1"/></svg>
<div class="a" style="left:309px;top:420px;width:326px;height:1px;background:#a0a0a0"></div>
<div class="btn" style="left:310px;top:433px;width:72px"></div>
<div class="btn" style="left:399px;top:433px;width:74px;border:2px solid #0078d7"></div>
<div class="btn" style="left:481px;top:433px;width:72px"></div>
<div class="btn" style="left:562px;top:432px;width:72px"></div>
<div class="a" style="left:308.2px;top:245.9px;font-size:12.5px;line-height:12.5px;color:#111;transform:scaleX(0.8742);transform-origin:0 0;"><u>D</u>elay Time:</div>
<div class="a" style="left:308.2px;top:291.2px;font-size:12.5px;line-height:12.5px;color:#111;transform:scaleX(0.9487);transform-origin:0 0;"><u>M</u>ix Depth:</div>
<div class="a" style="left:308.2px;top:336.4px;font-size:12.5px;line-height:12.5px;color:#111;transform:scaleX(0.9109);transform-origin:0 0;">Feedback <u>G</u>ain:</div>
<div class="a" style="left:400.5px;top:245.6px;font-size:12.5px;line-height:12.5px;color:#fff;transform:scaleX(0.9780);transform-origin:0 0;">200</div>
<div class="a" style="left:400.5px;top:290.9px;font-size:12.5px;line-height:12.5px;color:#111;transform:scaleX(0.9133);transform-origin:0 0;">70</div>
<div class="a" style="left:400.5px;top:336.1px;font-size:12.5px;line-height:12.5px;color:#111;transform:scaleX(0.9133);transform-origin:0 0;">40</div>
<div class="a" style="left:448.2px;top:258.6px;font-size:12.5px;line-height:12.5px;color:#111;transform:scaleX(0.8858);transform-origin:0 0;">0 ms</div>
<div class="a" style="left:594.2px;top:258.6px;font-size:12.5px;line-height:12.5px;color:#111;transform:scaleX(0.8550);transform-origin:0 0;">5000 ms</div>
<div class="a" style="left:448.2px;top:303.6px;font-size:12.5px;line-height:12.5px;color:#111;transform:scaleX(0.8354);transform-origin:0 0;">0 %</div>
<div class="a" style="left:605.2px;top:303.6px;font-size:12.5px;line-height:12.5px;color:#111;transform:scaleX(0.8462);transform-origin:0 0;">100 %</div>
<div class="a" style="left:448.2px;top:348.6px;font-size:12.5px;line-height:12.5px;color:#111;transform:scaleX(0.8354);transform-origin:0 0;">0 %</div>
<div class="a" style="left:605.2px;top:348.6px;font-size:12.5px;line-height:12.5px;color:#111;transform:scaleX(0.8462);transform-origin:0 0;">100 %</div>
<div class="a" style="left:307.8px;top:386.0px;font-size:12.5px;line-height:12.5px;color:#111;transform:scaleX(0.8766);transform-origin:0 0;"><u>P</u>resets:</div>
<div class="a" style="left:401.5px;top:389.9px;font-size:12.5px;line-height:12.5px;color:#111;transform:scaleX(0.8864);transform-origin:0 0;">Select Preset</div>
<div class="a" style="left:325.6px;top:440.4px;font-size:12.5px;line-height:12.5px;color:#111;transform:scaleX(0.9130);transform-origin:0 0;">Preview</div>
<div class="a" style="left:428.2px;top:440.4px;font-size:12.5px;line-height:12.5px;color:#111;transform:scaleX(0.8858);transform-origin:0 0;">OK</div>
<div class="a" style="left:498.2px;top:440.4px;font-size:12.5px;line-height:12.5px;color:#111;transform:scaleX(0.9095);transform-origin:0 0;">Cancel</div>
<div class="a" style="left:584.2px;top:439.5px;font-size:12.5px;line-height:12.5px;color:#111;transform:scaleX(0.9798);transform-origin:0 0;">Help</div>

</body></html>
